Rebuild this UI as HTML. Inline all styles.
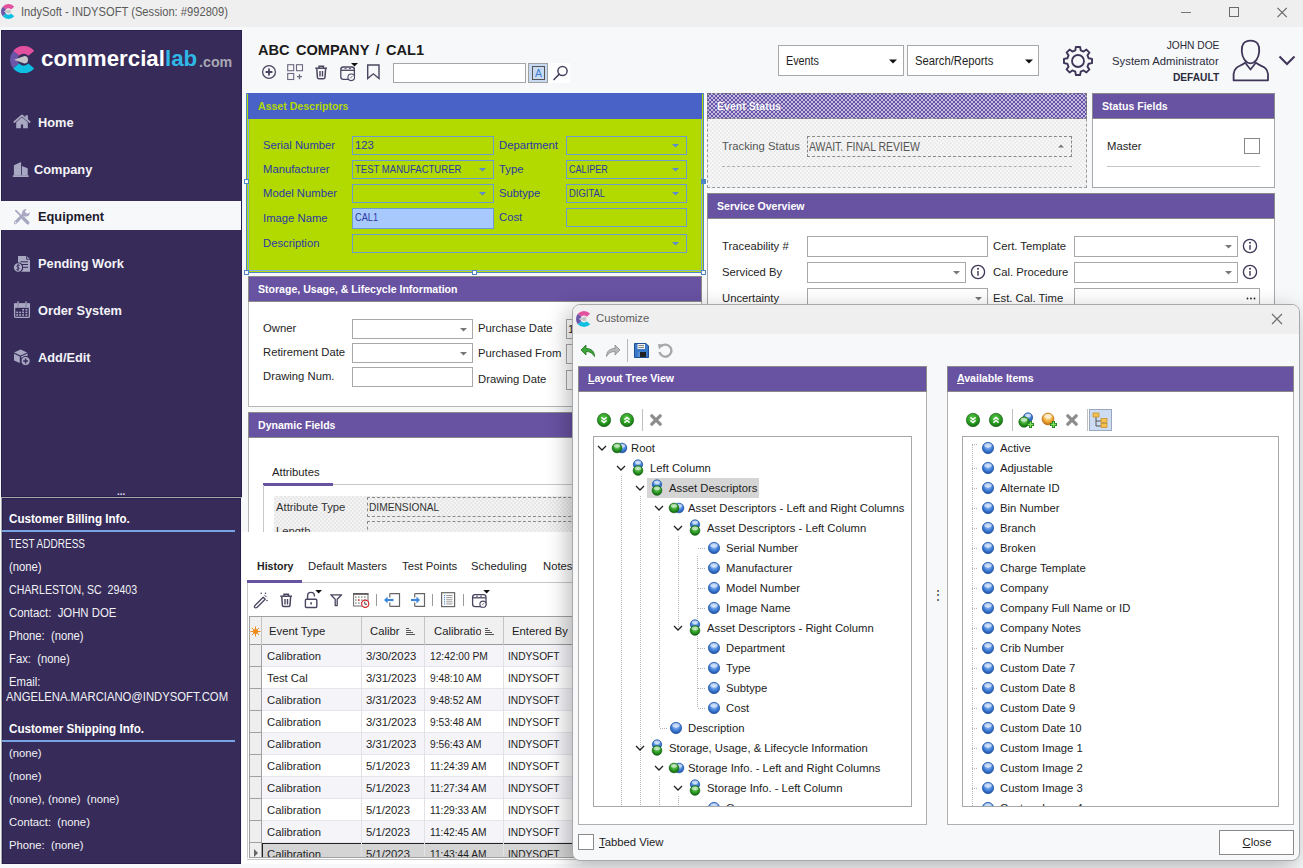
<!DOCTYPE html>
<html><head><meta charset="utf-8"><title>IndySoft</title>
<style>
*{margin:0;padding:0;box-sizing:border-box}
html,body{width:1303px;height:868px;overflow:hidden;background:#f7f8fa;font-family:'Liberation Sans', sans-serif}
.a{position:absolute}
.t{position:absolute;white-space:nowrap;line-height:1}
</style></head><body>
<div class="a" style="left:0px;top:0px;width:1303px;height:27px;background:#efefef"></div><div class="a" style="left:0px;top:27px;width:1303px;height:3px;background:#f7f8fa"></div><svg class="a" style="left:1px;top:4px;" width="15" height="15" viewBox="0 0 15 15"><path d="M11.64,4.03 A5.40,5.40 0 0 0 3.36,4.03" fill="none" stroke="#e2509e" stroke-width="4.20"/><path d="M3.36,4.03 A5.40,5.40 0 0 0 3.36,10.97" fill="none" stroke="#6a55a8" stroke-width="4.20"/><path d="M3.36,10.97 A5.40,5.40 0 0 0 11.64,10.97" fill="none" stroke="#0fc0e2" stroke-width="4.20"/><path d="M2.17,7.50 L7.88,5.47 A2.03,2.03 0 1,1 7.88,9.53 Z" fill="#c6c5ca"/></svg><div class="t" style="left:21px;top:5.54px;font-size:12px;font-weight:400;color:#5a5a5a;transform:scaleX(0.93);transform-origin:0 0;">IndySoft - INDYSOFT (Session: #992809)</div><svg class="a" style="left:1180px;top:7px;" width="110" height="12" viewBox="0 0 110 12"><path d="M1,5.5H11" stroke="#777" stroke-width="1"/><rect x="49.5" y="0.5" width="9" height="9" fill="none" stroke="#6a6a6a" stroke-width="1"/><path d="M97.5,0.8L106.8,10.1M106.8,0.8L97.5,10.1" stroke="#666" stroke-width="1.2"/></svg><div class="a" style="left:1px;top:30px;width:241px;height:467px;background:#362b59;border:1px solid #2a2050"></div><div class="a" style="left:1px;top:497px;width:1px;height:367px;background:#a8a8a8"></div><div class="a" style="left:2px;top:498px;width:239px;height:366px;background:#362b59;border:1px solid #2a2050"></div><svg class="a" style="left:10.3px;top:45.7px;" width="27.4" height="27.4" viewBox="0 0 27.4 27.4"><path d="M21.26,7.36 A9.86,9.86 0 0 0 6.14,7.36" fill="none" stroke="#e2509e" stroke-width="7.67"/><path d="M6.14,7.36 A9.86,9.86 0 0 0 6.14,20.04" fill="none" stroke="#6a55a8" stroke-width="7.67"/><path d="M6.14,20.04 A9.86,9.86 0 0 0 21.26,20.04" fill="none" stroke="#0fc0e2" stroke-width="7.67"/><path d="M3.97,13.70 L14.38,10.00 A3.70,3.70 0 1,1 14.38,17.40 Z" fill="#c6c5ca"/></svg><div class="t" style="left:41px;top:48.12px;font-size:22.3px;font-weight:700;color:#ffffff;">commercial</div><div class="t" style="left:165px;top:48.12px;font-size:22.3px;font-weight:700;color:#2fb8e6;">lab</div><div class="t" style="left:198.5px;top:54.30px;font-size:15px;font-weight:700;color:#a9a7b3;transform:scaleX(0.95);transform-origin:0 0;">.com</div><div class="a" style="left:1px;top:201px;width:240px;height:29px;background:#f7f8fa"></div><div class="t" style="left:38px;top:117.16px;font-size:12.8px;font-weight:700;color:#f4f3f8;">Home</div><div class="t" style="left:34px;top:164.16px;font-size:12.8px;font-weight:700;color:#f4f3f8;">Company</div><div class="t" style="left:38px;top:211.16px;font-size:12.8px;font-weight:700;color:#1b1b2b;">Equipment</div><div class="t" style="left:38px;top:258.16px;font-size:12.8px;font-weight:700;color:#f4f3f8;">Pending Work</div><div class="t" style="left:38px;top:305.16px;font-size:12.8px;font-weight:700;color:#f4f3f8;">Order System</div><div class="t" style="left:38px;top:352.16px;font-size:12.8px;font-weight:700;color:#f4f3f8;">Add/Edit</div><svg class="a" style="left:8px;top:108px;" width="30" height="30" viewBox="0 0 30 30"><path d="M8.2,12.2 L14,7.4 L19.8,12.2 V20.2 H15.1 V16.6 H12.9 V20.2 H8.2Z" fill="#a9a8c2"/><path d="M6.3,14 L14,7.3 L21.7,14" fill="none" stroke="#a9a8c2" stroke-width="1.7" stroke-linecap="round" stroke-linejoin="round"/><path d="M14,9 L8,14" stroke="#362b59" stroke-width="0.7"/><path d="M14,9 L20,14" stroke="#362b59" stroke-width="0.7"/><rect x="17.4" y="7.3" width="2.5" height="4" fill="#a9a8c2"/></svg><svg class="a" style="left:8px;top:155px;" width="30" height="30" viewBox="0 0 30 30"><path d="M5.9,10.2 L13.1,6.9 V20.5 H5.9Z M13.9,10.9 L19.7,13.3 V20.5 H13.9Z" fill="#a9a8c2"/><rect x="4.6" y="20.2" width="16.3" height="1.7" rx="0.8" fill="#a9a8c2"/></svg><svg class="a" style="left:8px;top:202px;" width="30" height="30" viewBox="0 0 30 30"><path d="M7.8,8.6 L14.5,15.3" stroke="#a9a8c2" stroke-width="1.7" stroke-linecap="round"/><path d="M15.3,16.3 L19.8,20.8" stroke="#a9a8c2" stroke-width="3.4" stroke-linecap="round"/><path d="M7.4,20.6 L15.2,12.8" stroke="#a9a8c2" stroke-width="3" stroke-linecap="round"/><path d="M14.2,12.4 C13.6,9.3 15.6,6.8 18.6,7 L17,9.4 L18.2,11.4 L20.8,11.3 L21.7,10 C22.2,13.2 19.6,15.2 16.6,14.6Z" fill="#a9a8c2"/><circle cx="7.6" cy="20.5" r="0.8" fill="#f7f8fa"/></svg><svg class="a" style="left:8px;top:250px;" width="30" height="30" viewBox="0 0 30 30"><path d="M10,5.9 H18.6 L22,9.3 V21.8 H10Z" fill="#a9a8c2"/><path d="M18.6,5.9 V9.3 H22" fill="none" stroke="#362b59" stroke-width="0.9"/><path d="M12.5,11.8H20M14,14.5H20M15,17.3H20" stroke="#362b59" stroke-width="1"/><circle cx="10" cy="17.5" r="4.7" fill="#a9a8c2" stroke="#362b59" stroke-width="1.1"/><path d="M10,14.2 V20.8 M11.6,15.4 C9,14.3 8.2,17 10,17.4 C11.8,17.8 11.2,20.3 8.4,19.5" fill="none" stroke="#362b59" stroke-width="1"/></svg><svg class="a" style="left:8px;top:296px;" width="30" height="30" viewBox="0 0 30 30"><rect x="6.6" y="8" width="14.8" height="13.4" rx="0.8" fill="none" stroke="#a9a8c2" stroke-width="1.3"/><rect x="6" y="7.4" width="16" height="4.4" fill="#a9a8c2"/><path d="M10,5.8V10.5M18,5.8V10.5" stroke="#8f8ea8" stroke-width="1.6" stroke-linecap="round"/><rect x="14.2" y="13.0" width="1.8" height="1.6" fill="#a9a8c2"/><rect x="17.5" y="13.0" width="1.8" height="1.6" fill="#a9a8c2"/><rect x="8.299999999999999" y="15.599999999999998" width="1.8" height="1.6" fill="#a9a8c2"/><rect x="11.2" y="15.599999999999998" width="1.8" height="1.6" fill="#a9a8c2"/><rect x="14.2" y="15.599999999999998" width="1.8" height="1.6" fill="#a9a8c2"/><rect x="17.5" y="15.599999999999998" width="1.8" height="1.6" fill="#a9a8c2"/><rect x="8.299999999999999" y="18.2" width="1.8" height="1.6" fill="#a9a8c2"/><rect x="11.2" y="18.2" width="1.8" height="1.6" fill="#a9a8c2"/><rect x="14.2" y="18.2" width="1.8" height="1.6" fill="#a9a8c2"/><rect x="17.5" y="18.2" width="1.8" height="1.6" fill="#a9a8c2"/></svg><svg class="a" style="left:8px;top:343px;" width="30" height="30" viewBox="0 0 30 30"><path d="M6,9.6 L12.6,6.4 L19.2,9.6 L12.6,12.6Z" fill="#a9a8c2"/><path d="M6,10.8 L11.8,13.4 V20 L6,17.6Z" fill="#a9a8c2"/><path d="M13.3,13.3 L19.6,10.6 V12.6 L13.3,15.3Z" fill="#a9a8c2"/><circle cx="17.6" cy="18" r="4.6" fill="#a9a8c2" stroke="#362b59" stroke-width="1"/><path d="M17.6,15.6V20.4M15.2,18H20" stroke="#362b59" stroke-width="1.5"/></svg><div class="t" style="left:117px;top:486.54px;font-size:10px;font-weight:700;color:#d8d8e8;">...</div><div class="a" style="left:1px;top:497px;width:241px;height:1px;background:#a8a8a8"></div><div class="t" style="left:9px;top:513.42px;font-size:12.5px;font-weight:700;color:#ffffff;transform:scaleX(0.93);transform-origin:0 0;">Customer Billing Info.</div><div class="a" style="left:2px;top:530px;width:233px;height:2px;background:#7aa3e6"></div><div class="t" style="left:9px;top:537.84px;font-size:12px;font-weight:400;color:#f2f2f6;transform:scaleX(0.834);transform-origin:0 0;">TEST ADDRESS</div><div class="t" style="left:9px;top:560.84px;font-size:12px;font-weight:400;color:#f2f2f6;transform:scaleX(0.94);transform-origin:0 0;">(none)</div><div class="t" style="left:9px;top:583.84px;font-size:12px;font-weight:400;color:#f2f2f6;transform:scaleX(0.882);transform-origin:0 0;">CHARLESTON, SC&nbsp; 29403</div><div class="t" style="left:9px;top:606.84px;font-size:12px;font-weight:400;color:#f2f2f6;transform:scaleX(0.947);transform-origin:0 0;">Contact:&nbsp; JOHN DOE</div><div class="t" style="left:9px;top:629.84px;font-size:12px;font-weight:400;color:#f2f2f6;transform:scaleX(0.94);transform-origin:0 0;">Phone:&nbsp; (none)</div><div class="t" style="left:9px;top:652.84px;font-size:12px;font-weight:400;color:#f2f2f6;transform:scaleX(0.94);transform-origin:0 0;">Fax:&nbsp; (none)</div><div class="t" style="left:9px;top:675.84px;font-size:12px;font-weight:400;color:#f2f2f6;transform:scaleX(0.94);transform-origin:0 0;">Email:</div><div class="t" style="left:6px;top:690.84px;font-size:12px;font-weight:400;color:#f2f2f6;transform:scaleX(0.94);transform-origin:0 0;">ANGELENA.MARCIANO@INDYSOFT.COM</div><div class="t" style="left:9px;top:723.42px;font-size:12.5px;font-weight:700;color:#ffffff;transform:scaleX(0.93);transform-origin:0 0;">Customer Shipping Info.</div><div class="a" style="left:2px;top:740px;width:233px;height:2px;background:#7aa3e6"></div><div class="t" style="left:9px;top:748.27px;font-size:11.5px;font-weight:400;color:#f2f2f6;transform:scaleX(0.9809);transform-origin:0 0;">(none)</div><div class="t" style="left:9px;top:771.27px;font-size:11.5px;font-weight:400;color:#f2f2f6;transform:scaleX(0.9809);transform-origin:0 0;">(none)</div><div class="t" style="left:9px;top:794.27px;font-size:11.5px;font-weight:400;color:#f2f2f6;transform:scaleX(0.9809);transform-origin:0 0;">(none), (none)&nbsp; (none)</div><div class="t" style="left:9px;top:817.27px;font-size:11.5px;font-weight:400;color:#f2f2f6;transform:scaleX(0.9809);transform-origin:0 0;">Contact:&nbsp; (none)</div><div class="t" style="left:9px;top:840.27px;font-size:11.5px;font-weight:400;color:#f2f2f6;transform:scaleX(0.9809);transform-origin:0 0;">Phone:&nbsp; (none)</div><div class="t" style="left:258px;top:42.38px;font-size:15.5px;font-weight:700;color:#1b1b1b;transform:scaleX(0.94);transform-origin:0 0;word-spacing:2.5px">ABC COMPANY / CAL1</div><svg class="a" style="left:255px;top:58px;" width="130" height="28" viewBox="0 0 130 28"><circle cx="14" cy="14" r="6.4" fill="none" stroke="#4b4560" stroke-width="1.3"/><path d="M14,10.6V17.4M10.6,14H17.4" stroke="#4b4560" stroke-width="1.8"/><rect x="32.7" y="6.7" width="6" height="6" fill="none" stroke="#6e6880" stroke-width="1.1"/><rect x="41.5" y="6.7" width="6" height="6" fill="none" stroke="#6e6880" stroke-width="1.1"/><rect x="32.7" y="15.5" width="6" height="6" fill="none" stroke="#6e6880" stroke-width="1.1"/><path d="M44.5,16.2V21.2M42,18.7H47" stroke="#6e6880" stroke-width="1.3"/><path d="M60.3,10.2H72" stroke="#4b4560" stroke-width="1.5"/><path d="M64,10V8.2H68.5V10" fill="none" stroke="#4b4560" stroke-width="1.4"/><path d="M61.8,11 L62.4,19.5 Q62.6,20.8 64,20.8 H68.4 Q69.8,20.8 70,19.5 L70.6,11" fill="none" stroke="#4b4560" stroke-width="1.5"/><path d="M65,13V18.5M67.5,13V18.5" stroke="#4b4560" stroke-width="1.4"/><rect x="85.8" y="9" width="13.6" height="12.4" rx="2.6" fill="none" stroke="#4b4560" stroke-width="1.3"/><path d="M86,12.3H99.2" stroke="#4b4560" stroke-width="1.3"/><path d="M89.5,10.6H91.5M94,10.6H96" stroke="#4b4560" stroke-width="0.9"/><circle cx="96.2" cy="19.3" r="3.3" fill="#f7f8fa" stroke="#4b4560" stroke-width="1.1"/><path d="M95.3,20.3L97.2,18.2" stroke="#4b4560" stroke-width="0.8"/><path d="M96,5H103L99.5,8.6Z" fill="#111"/><path d="M112.7,7H124V20.6L118.35,15.8L112.7,20.6Z" fill="none" stroke="#4b4560" stroke-width="1.4" stroke-linejoin="miter"/></svg><div class="a" style="left:393px;top:63px;width:133px;height:20px;background:#fff;border:1px solid #a6a6a6"></div><div class="a" style="left:528px;top:63px;width:20px;height:20px;background:#c8d9f2;border:1px solid #a0a0a0"></div><div class="a" style="left:532px;top:66px;width:13px;height:14px;border:1px solid #555"></div><div class="t" style="left:535px;top:68.19px;font-size:11px;font-weight:400;color:#3d7fd0;transform:scaleX(0.95);transform-origin:0 0;">A</div><div class="a" style="left:548px;top:63px;width:22px;height:20px;background:#ffffff"></div><svg class="a" style="left:552px;top:65px;" width="17" height="17" viewBox="0 0 17 17"><circle cx="10.5" cy="6" r="4.6" fill="none" stroke="#4b4560" stroke-width="1.5"/><path d="M7.3,9.2L2,14.5" stroke="#4b4560" stroke-width="1.7" stroke-linecap="round"/></svg><div class="a" style="left:778px;top:45px;width:126px;height:31px;background:#fff;border:1px solid #a8a8a8"></div><div class="t" style="left:786px;top:54.84px;font-size:12px;font-weight:400;color:#1e1e1e;transform:scaleX(0.9);transform-origin:0 0;">Events</div><svg class="a" style="left:889px;top:59px;" width="9" height="5" viewBox="0 0 9 5"><path d="M0,0.5H8L4,4.5Z" fill="#111"/></svg><div class="a" style="left:907px;top:45px;width:132px;height:31px;background:#fff;border:1px solid #a8a8a8"></div><div class="t" style="left:915px;top:54.84px;font-size:12px;font-weight:400;color:#1e1e1e;transform:scaleX(0.94);transform-origin:0 0;">Search/Reports</div><svg class="a" style="left:1025px;top:59px;" width="9" height="5" viewBox="0 0 9 5"><path d="M0,0.5H8L4,4.5Z" fill="#111"/></svg><svg class="a" style="left:1062px;top:45px;" width="32" height="32" viewBox="0 0 32 32"><path d="M26.66,13.28 L30.04,13.88 L30.04,18.12 L26.66,18.72 L25.46,21.61 L27.43,24.43 L24.43,27.43 L21.61,25.46 L18.72,26.66 L18.12,30.04 L13.88,30.04 L13.28,26.66 L10.39,25.46 L7.57,27.43 L4.57,24.43 L6.54,21.61 L5.34,18.72 L1.96,18.12 L1.96,13.88 L5.34,13.28 L6.54,10.39 L4.57,7.57 L7.57,4.57 L10.39,6.54 L13.28,5.34 L13.88,1.96 L18.12,1.96 L18.72,5.34 L21.61,6.54 L24.43,4.57 L27.43,7.57 L25.46,10.39Z" fill="none" stroke="#3e3558" stroke-width="1.9" stroke-linejoin="round"/><circle cx="16" cy="16" r="6" fill="none" stroke="#3e3558" stroke-width="1.8"/></svg><div class="t" style="right:84px;top:40.27px;font-size:11.5px;font-weight:400;color:#2b2b3b;transform:scaleX(0.887);transform-origin:100% 0;">JOHN DOE</div><div class="t" style="right:84px;top:56.27px;font-size:11.5px;font-weight:400;color:#2b2b3b;transform:scaleX(0.9809);transform-origin:100% 0;">System Administrator</div><div class="t" style="right:84px;top:72.27px;font-size:11.5px;font-weight:700;color:#2b2b3b;transform:scaleX(0.887);transform-origin:100% 0;">DEFAULT</div><svg class="a" style="left:1231px;top:39px;" width="39" height="43" viewBox="0 0 39 43"><path d="M19.5,1.7 C12.5,1.7 10.3,6.5 10.8,12.5 C11.3,19 14.5,24.3 19.5,24.3 C24.5,24.3 27.7,19 28.2,12.5 C28.7,6.5 26.5,1.7 19.5,1.7Z" fill="none" stroke="#3e3558" stroke-width="1.8"/><path d="M14,23.5 L19.5,30.5 L25,23.5" fill="none" stroke="#3e3558" stroke-width="1.7" stroke-linejoin="round"/><path d="M14,23.5 C11,27.5 3.2,26.5 2.6,35 V41.3 H37 V35 C36.4,26.5 28,27.5 25,23.5" fill="none" stroke="#3e3558" stroke-width="1.8" stroke-linejoin="round"/></svg><svg class="a" style="left:1278px;top:55px;" width="18" height="12" viewBox="0 0 18 12"><path d="M1.5,1.5L9,9L16.5,1.5" fill="none" stroke="#3e3558" stroke-width="2"/></svg><div class="a" style="left:246px;top:93px;width:458px;height:180px;border:1px solid #4f86c6"></div><div class="a" style="left:247px;top:94px;width:456px;height:178px;background:#b2d900"></div><div class="a" style="left:248px;top:93px;width:454px;height:26px;background:#4962c8"></div><div class="a" style="left:248px;top:270px;width:454px;height:1px;background:#84aee0"></div><div class="a" style="left:248px;top:119px;width:1px;height:152px;background:#84aee0"></div><div class="a" style="left:701px;top:119px;width:1px;height:152px;background:#84aee0"></div><div class="t" style="left:258px;top:101.27px;font-size:11.5px;font-weight:700;color:#b2d900;transform:scaleX(0.9183);transform-origin:0 0;">Asset Descriptors</div><div class="a" style="left:244px;top:179px;width:5px;height:5px;background:#fff;border:1px solid #4f86c6"></div><div class="a" style="left:472px;top:270px;width:5px;height:5px;background:#fff;border:1px solid #4f86c6"></div><div class="a" style="left:701px;top:179px;width:5px;height:5px;background:#fff;border:1px solid #4f86c6"></div><div class="a" style="left:244px;top:270px;width:5px;height:5px;background:#fff;border:1px solid #4f86c6"></div><div class="a" style="left:701px;top:270px;width:5px;height:5px;background:#fff;border:1px solid #4f86c6"></div><div class="a" style="left:701px;top:179px;width:5px;height:5px;background:#4f86c6"></div><div class="t" style="left:263px;top:140.27px;font-size:11.5px;font-weight:400;color:#2c3aa6;transform:scaleX(0.9809);transform-origin:0 0;">Serial Number</div><div class="t" style="left:263px;top:164.27px;font-size:11.5px;font-weight:400;color:#2c3aa6;transform:scaleX(0.9809);transform-origin:0 0;">Manufacturer</div><div class="t" style="left:263px;top:188.27px;font-size:11.5px;font-weight:400;color:#2c3aa6;transform:scaleX(0.9809);transform-origin:0 0;">Model Number</div><div class="t" style="left:263px;top:213.27px;font-size:11.5px;font-weight:400;color:#2c3aa6;transform:scaleX(0.9809);transform-origin:0 0;">Image Name</div><div class="t" style="left:263px;top:238.27px;font-size:11.5px;font-weight:400;color:#2c3aa6;transform:scaleX(0.9809);transform-origin:0 0;">Description</div><div class="t" style="left:499px;top:140.27px;font-size:11.5px;font-weight:400;color:#2c3aa6;transform:scaleX(0.9809);transform-origin:0 0;">Department</div><div class="t" style="left:499px;top:164.27px;font-size:11.5px;font-weight:400;color:#2c3aa6;transform:scaleX(0.9809);transform-origin:0 0;">Type</div><div class="t" style="left:499px;top:188.27px;font-size:11.5px;font-weight:400;color:#2c3aa6;transform:scaleX(0.9809);transform-origin:0 0;">Subtype</div><div class="t" style="left:499px;top:212.27px;font-size:11.5px;font-weight:400;color:#2c3aa6;transform:scaleX(0.9809);transform-origin:0 0;">Cost</div><div class="a" style="left:352px;top:136px;width:142px;height:19px;border:1px solid #6c9bcc;"></div><div class="t" style="left:355px;top:140.27px;font-size:11.5px;font-weight:400;color:#2c3aa6;transform:scaleX(0.9809);transform-origin:0 0;">123</div><div class="a" style="left:352px;top:160px;width:142px;height:19px;border:1px solid #6c9bcc;"></div><div class="t" style="left:355px;top:164.27px;font-size:11.5px;font-weight:400;color:#2c3aa6;transform:scaleX(0.83);transform-origin:0 0;">TEST MANUFACTURER</div><svg class="a" style="left:479px;top:168px;" width="8" height="4" viewBox="0 0 8 4"><path d="M0,0H7L3.5,3.5Z" fill="#5a8ad0"/></svg><div class="a" style="left:352px;top:184px;width:142px;height:19px;border:1px solid #6c9bcc;"></div><svg class="a" style="left:479px;top:192px;" width="8" height="4" viewBox="0 0 8 4"><path d="M0,0H7L3.5,3.5Z" fill="#5a8ad0"/></svg><div class="a" style="left:352px;top:208px;width:142px;height:21px;border:1px solid #6c9bcc;background:#a8c9fb;"></div><div class="t" style="left:355px;top:212.27px;font-size:11.5px;font-weight:400;color:#2c3aa6;transform:scaleX(0.8);transform-origin:0 0;">CAL1</div><div class="a" style="left:352px;top:234px;width:335px;height:19px;border:1px solid #6c9bcc;"></div><svg class="a" style="left:672px;top:242px;" width="8" height="4" viewBox="0 0 8 4"><path d="M0,0H7L3.5,3.5Z" fill="#5a8ad0"/></svg><div class="a" style="left:566px;top:136px;width:121px;height:19px;border:1px solid #6c9bcc;"></div><svg class="a" style="left:672px;top:144px;" width="8" height="4" viewBox="0 0 8 4"><path d="M0,0H7L3.5,3.5Z" fill="#5a8ad0"/></svg><div class="a" style="left:566px;top:160px;width:121px;height:19px;border:1px solid #6c9bcc;"></div><div class="t" style="left:569px;top:164.27px;font-size:11.5px;font-weight:400;color:#2c3aa6;transform:scaleX(0.79);transform-origin:0 0;">CALIPER</div><svg class="a" style="left:672px;top:168px;" width="8" height="4" viewBox="0 0 8 4"><path d="M0,0H7L3.5,3.5Z" fill="#5a8ad0"/></svg><div class="a" style="left:566px;top:184px;width:121px;height:19px;border:1px solid #6c9bcc;"></div><div class="t" style="left:569px;top:188.27px;font-size:11.5px;font-weight:400;color:#2c3aa6;transform:scaleX(0.82);transform-origin:0 0;">DIGITAL</div><svg class="a" style="left:672px;top:192px;" width="8" height="4" viewBox="0 0 8 4"><path d="M0,0H7L3.5,3.5Z" fill="#5a8ad0"/></svg><div class="a" style="left:566px;top:208px;width:121px;height:19px;border:1px solid #6c9bcc;"></div><div class="a" style="left:707px;top:93px;width:380px;height:95px;background:repeating-conic-gradient(#ececec 0 25%, #f6f6f6 0 50%) 0 0/4px 4px;border:1px dashed #9a9a9a"></div><div class="a" style="left:707px;top:93px;width:380px;height:26px;background:repeating-conic-gradient(#6854a8 0 25%, #c4bcde 0 50%) 0 0/4px 4px"></div><div class="a" style="left:707px;top:93px;width:380px;height:26px;border:1px dashed #777"></div><div class="a" style="left:707px;top:118px;width:380px;height:1px;border-top:1px dashed #8a8a8a"></div><div class="t" style="left:717px;top:101.27px;font-size:11.5px;font-weight:700;color:#ffffff;transform:scaleX(0.9183);transform-origin:0 0;text-shadow:0 0 1px #3f2f93">Event Status</div><div class="t" style="left:722px;top:141.27px;font-size:11.5px;font-weight:400;color:#555;transform:scaleX(0.9809);transform-origin:0 0;">Tracking Status</div><div class="a" style="left:807px;top:136px;width:265px;height:21px;border:1px dashed #8a8a8a"></div><div class="t" style="left:809px;top:140.84px;font-size:12px;font-weight:400;color:#555;transform:scaleX(0.876);transform-origin:0 0;">AWAIT. FINAL REVIEW</div><svg class="a" style="left:1058px;top:144px;" width="6" height="4" viewBox="0 0 6 4"><path d="M0,3.5L3,0.5L6,3.5Z" fill="#777"/></svg><div class="a" style="left:722px;top:166px;width:350px;height:1px;border-top:1px dashed #b0b0b0"></div><div class="a" style="left:1092px;top:93px;width:183px;height:95px;background:#fff;border:1px solid #a9a9a9"></div><div class="a" style="left:1092px;top:93px;width:183px;height:26px;background:#6852a2;border:1px solid #8b8b8b"></div><div class="t" style="left:1102px;top:101.27px;font-size:11.5px;font-weight:700;color:#ffffff;transform:scaleX(0.9183);transform-origin:0 0;">Status Fields</div><div class="t" style="left:1107px;top:141.27px;font-size:11.5px;font-weight:400;color:#1e1e1e;transform:scaleX(0.9809);transform-origin:0 0;">Master</div><div class="a" style="left:1244px;top:138px;width:16px;height:16px;border:1px solid #888;background:#fff"></div><div class="a" style="left:1107px;top:166px;width:153px;height:1px;background:#c4c4c4"></div><div class="a" style="left:707px;top:193px;width:568px;height:140px;background:#fff;border:1px solid #a9a9a9"></div><div class="a" style="left:707px;top:193px;width:568px;height:26px;background:#6852a2;border:1px solid #8b8b8b"></div><div class="t" style="left:717px;top:201.27px;font-size:11.5px;font-weight:700;color:#ffffff;transform:scaleX(0.9183);transform-origin:0 0;">Service Overview</div><div class="t" style="left:722px;top:241.27px;font-size:11.5px;font-weight:400;color:#1e1e1e;transform:scaleX(0.9809);transform-origin:0 0;">Traceability #</div><div class="t" style="left:722px;top:267.27px;font-size:11.5px;font-weight:400;color:#1e1e1e;transform:scaleX(0.9809);transform-origin:0 0;">Serviced By</div><div class="t" style="left:722px;top:293.27px;font-size:11.5px;font-weight:400;color:#1e1e1e;transform:scaleX(0.9809);transform-origin:0 0;">Uncertainty</div><div class="a" style="left:807px;top:236px;width:181px;height:21px;background:#fff;border:1px solid #a8a8a8"></div><div class="a" style="left:807px;top:262px;width:159px;height:21px;background:#fff;border:1px solid #a8a8a8"></div><svg class="a" style="left:953px;top:271px;" width="7" height="4" viewBox="0 0 7 4"><path d="M0,0H7L3.5,3.5Z" fill="#777"/></svg><svg class="a" style="left:970px;top:264px;" width="16" height="16" viewBox="0 0 16 16"><circle cx="8" cy="8" r="6.6" fill="none" stroke="#3e3558" stroke-width="1.3"/><circle cx="8" cy="4.8" r="1" fill="#3e3558"/><path d="M8,7V11.8" stroke="#3e3558" stroke-width="1.4"/></svg><div class="a" style="left:807px;top:288px;width:181px;height:21px;background:#fff;border:1px solid #a8a8a8"></div><svg class="a" style="left:975px;top:297px;" width="7" height="4" viewBox="0 0 7 4"><path d="M0,0H7L3.5,3.5Z" fill="#777"/></svg><div class="t" style="left:993px;top:241.27px;font-size:11.5px;font-weight:400;color:#1e1e1e;transform:scaleX(0.9809);transform-origin:0 0;">Cert. Template</div><div class="t" style="left:993px;top:267.27px;font-size:11.5px;font-weight:400;color:#1e1e1e;transform:scaleX(0.9809);transform-origin:0 0;">Cal. Procedure</div><div class="t" style="left:993px;top:293.27px;font-size:11.5px;font-weight:400;color:#1e1e1e;transform:scaleX(0.9809);transform-origin:0 0;">Est. Cal. Time</div><div class="a" style="left:1074px;top:236px;width:164px;height:21px;background:#fff;border:1px solid #a8a8a8"></div><svg class="a" style="left:1225px;top:245px;" width="7" height="4" viewBox="0 0 7 4"><path d="M0,0H7L3.5,3.5Z" fill="#777"/></svg><svg class="a" style="left:1242px;top:238px;" width="16" height="16" viewBox="0 0 16 16"><circle cx="8" cy="8" r="6.6" fill="none" stroke="#3e3558" stroke-width="1.3"/><circle cx="8" cy="4.8" r="1" fill="#3e3558"/><path d="M8,7V11.8" stroke="#3e3558" stroke-width="1.4"/></svg><div class="a" style="left:1074px;top:262px;width:164px;height:21px;background:#fff;border:1px solid #a8a8a8"></div><svg class="a" style="left:1225px;top:271px;" width="7" height="4" viewBox="0 0 7 4"><path d="M0,0H7L3.5,3.5Z" fill="#777"/></svg><svg class="a" style="left:1242px;top:264px;" width="16" height="16" viewBox="0 0 16 16"><circle cx="8" cy="8" r="6.6" fill="none" stroke="#3e3558" stroke-width="1.3"/><circle cx="8" cy="4.8" r="1" fill="#3e3558"/><path d="M8,7V11.8" stroke="#3e3558" stroke-width="1.4"/></svg><div class="a" style="left:1074px;top:288px;width:186px;height:21px;background:#fff;border:1px solid #a8a8a8"></div><svg class="a" style="left:1246px;top:297px;" width="10" height="3" viewBox="0 0 10 3"><circle cx="1.5" cy="1.5" r="0.9" fill="#222"/><circle cx="5" cy="1.5" r="0.9" fill="#222"/><circle cx="8.5" cy="1.5" r="0.9" fill="#222"/></svg><div class="a" style="left:248px;top:276px;width:454px;height:131px;background:#fff;border:1px solid #b5b5b5"></div><div class="a" style="left:248px;top:276px;width:454px;height:26px;background:#6852a2;border:1px solid #8b8b8b"></div><div class="t" style="left:258px;top:284.27px;font-size:11.5px;font-weight:700;color:#ffffff;transform:scaleX(0.9183);transform-origin:0 0;">Storage, Usage, &amp; Lifecycle Information</div><div class="t" style="left:263px;top:323.27px;font-size:11.5px;font-weight:400;color:#1e1e1e;transform:scaleX(0.9809);transform-origin:0 0;">Owner</div><div class="t" style="left:263px;top:347.27px;font-size:11.5px;font-weight:400;color:#1e1e1e;transform:scaleX(0.9809);transform-origin:0 0;">Retirement Date</div><div class="t" style="left:263px;top:371.27px;font-size:11.5px;font-weight:400;color:#1e1e1e;transform:scaleX(0.9809);transform-origin:0 0;">Drawing Num.</div><div class="a" style="left:352px;top:319px;width:121px;height:20px;background:#fff;border:1px solid #a8a8a8"></div><svg class="a" style="left:460px;top:328px;" width="7" height="4" viewBox="0 0 7 4"><path d="M0,0H7L3.5,3.5Z" fill="#777"/></svg><div class="a" style="left:352px;top:343px;width:121px;height:20px;background:#fff;border:1px solid #a8a8a8"></div><svg class="a" style="left:460px;top:352px;" width="7" height="4" viewBox="0 0 7 4"><path d="M0,0H7L3.5,3.5Z" fill="#777"/></svg><div class="a" style="left:352px;top:367px;width:121px;height:20px;background:#fff;border:1px solid #a8a8a8"></div><div class="t" style="left:478px;top:323.27px;font-size:11.5px;font-weight:400;color:#1e1e1e;transform:scaleX(0.9809);transform-origin:0 0;">Purchase Date</div><div class="t" style="left:478px;top:348.27px;font-size:11.5px;font-weight:400;color:#1e1e1e;transform:scaleX(0.9809);transform-origin:0 0;">Purchased From</div><div class="t" style="left:478px;top:374.27px;font-size:11.5px;font-weight:400;color:#1e1e1e;transform:scaleX(0.9809);transform-origin:0 0;">Drawing Date</div><div class="a" style="left:566px;top:319px;width:130px;height:20px;background:#fff;border:1px solid #a8a8a8"></div><div class="t" style="left:568px;top:324.27px;font-size:11.5px;font-weight:400;color:#1e1e1e;transform:scaleX(0.9809);transform-origin:0 0;">1</div><div class="a" style="left:566px;top:344px;width:130px;height:20px;background:#fff;border:1px solid #a8a8a8"></div><div class="a" style="left:566px;top:370px;width:130px;height:20px;background:#fff;border:1px solid #a8a8a8"></div><div class="a" style="left:248px;top:412px;width:454px;height:121px;background:#fff;border:1px solid #b5b5b5;border-bottom:none"></div><div class="a" style="left:248px;top:412px;width:454px;height:26px;background:#6852a2;border:1px solid #8b8b8b"></div><div class="t" style="left:258px;top:420.27px;font-size:11.5px;font-weight:700;color:#ffffff;transform:scaleX(0.9183);transform-origin:0 0;">Dynamic Fields</div><div class="t" style="left:272px;top:467.27px;font-size:11.5px;font-weight:400;color:#1e1e1e;transform:scaleX(0.9809);transform-origin:0 0;">Attributes</div><div class="a" style="left:263px;top:484px;width:440px;height:1px;background:#c8c8c8"></div><div class="a" style="left:263px;top:483px;width:70px;height:3px;background:#6852a2"></div><div class="a" style="left:263px;top:485px;width:1px;height:47px;background:#c8c8c8"></div><div class="a" style="left:274px;top:496px;width:430px;height:36px;background:repeating-conic-gradient(#e8e8e8 0 25%, #f3f3f3 0 50%) 0 0/4px 4px"></div><div class="t" style="left:276px;top:502.27px;font-size:11.5px;font-weight:400;color:#333;transform:scaleX(0.9809);transform-origin:0 0;">Attribute Type</div><div class="a" style="left:367px;top:497px;width:340px;height:20px;border:1px dashed #8a8a8a"></div><div class="t" style="left:369px;top:502.27px;font-size:11.5px;font-weight:400;color:#333;transform:scaleX(0.887);transform-origin:0 0;">DIMENSIONAL</div><div class="a" style="left:367px;top:521px;width:340px;height:20px;border:1px dashed #8a8a8a"></div><div class="t" style="left:276px;top:526.27px;font-size:11.5px;font-weight:400;color:#333;transform:scaleX(0.9809);transform-origin:0 0;">Length</div><div class="a" style="left:242px;top:532px;width:340px;height:13px;background:#ffffff"></div><div class="a" style="left:242px;top:545px;width:340px;height:323px;background:#ffffff"></div><div class="t" style="left:257px;top:561.27px;font-size:11.5px;font-weight:700;color:#1e1e1e;transform:scaleX(0.9183);transform-origin:0 0;">History</div><div class="t" style="left:307.5px;top:561.27px;font-size:11.5px;font-weight:400;color:#1e1e1e;transform:scaleX(0.9809);transform-origin:0 0;">Default Masters</div><div class="t" style="left:402px;top:561.27px;font-size:11.5px;font-weight:400;color:#1e1e1e;transform:scaleX(0.9809);transform-origin:0 0;">Test Points</div><div class="t" style="left:471px;top:561.27px;font-size:11.5px;font-weight:400;color:#1e1e1e;transform:scaleX(0.9809);transform-origin:0 0;">Scheduling</div><div class="t" style="left:543px;top:561.27px;font-size:11.5px;font-weight:400;color:#1e1e1e;transform:scaleX(0.9809);transform-origin:0 0;">Notes</div><div class="a" style="left:247px;top:582px;width:335px;height:1px;background:#c8c8c8"></div><div class="a" style="left:247px;top:582px;width:1px;height:278px;background:#c8c8c8"></div><div class="a" style="left:247px;top:580px;width:55px;height:3px;background:#6852a2"></div><svg class="a" style="left:250px;top:586px;" width="250" height="26" viewBox="0 0 250 26"><path d="M5.2,19.2 L13.2,11.2 L15.2,13.2 L7.2,21.2 Q5.8,22.3 4.7,21.5 Q3.9,20.5 5.2,19.2Z" fill="none" stroke="#4b4560" stroke-width="1.3" stroke-linejoin="round"/><circle cx="11.2" cy="7.3" r="0.8" fill="#4b4560"/><circle cx="15.5" cy="7.3" r="0.8" fill="#4b4560"/><circle cx="17" cy="14.5" r="0.8" fill="#4b4560"/><path d="M14.6,9.2 L16.6,11.2" stroke="#4b4560" stroke-width="1"/><path d="M30.3,10.2H42" stroke="#4b4560" stroke-width="1.5"/><path d="M34,10V8.2H38.5V10" fill="none" stroke="#4b4560" stroke-width="1.4"/><path d="M31.8,11 L32.4,19.3 Q32.6,20.6 34,20.6 H38.4 Q39.8,20.6 40,19.3 L40.6,11" fill="none" stroke="#4b4560" stroke-width="1.5"/><path d="M35,13V18.5M37.5,13V18.5" stroke="#4b4560" stroke-width="1.4"/><rect x="55.4" y="13.2" width="11.4" height="8.3" rx="1" fill="none" stroke="#4b4560" stroke-width="1.4"/><path d="M57.6,13 V9.8 A3.4,3.4 0 0,1 64.4,9.8 V10.5" fill="none" stroke="#4b4560" stroke-width="1.4"/><path d="M61.1,16.2V18.6" stroke="#4b4560" stroke-width="1.6"/><path d="M65.3,4H72L68.65,7.6Z" fill="#111"/><path d="M80.8,8.8 H91.6 L87.2,13.2 V19.6 H85.2 V13.2Z" fill="none" stroke="#4b4560" stroke-width="1.3" stroke-linejoin="round"/><rect x="103.6" y="7.6" width="14.4" height="12.4" fill="none" stroke="#6a6a6a" stroke-width="1"/><rect x="103.2" y="7.2" width="15.2" height="1.6" fill="#555"/><rect x="105" y="10.3" width="1.6" height="1.5" fill="#9a9a9a"/><rect x="108" y="10.3" width="1.6" height="1.5" fill="#9a9a9a"/><rect x="111" y="10.3" width="1.6" height="1.5" fill="#9a9a9a"/><rect x="114" y="10.3" width="1.6" height="1.5" fill="#9a9a9a"/><rect x="105" y="13.3" width="1.6" height="1.5" fill="#9a9a9a"/><rect x="108" y="13.3" width="1.6" height="1.5" fill="#d02020"/><rect x="111" y="13.3" width="1.6" height="1.5" fill="#9a9a9a"/><rect x="114" y="13.3" width="1.6" height="1.5" fill="#9a9a9a"/><rect x="105" y="16.3" width="1.6" height="1.5" fill="#9a9a9a"/><rect x="108" y="16.3" width="1.6" height="1.5" fill="#9a9a9a"/><rect x="111" y="16.3" width="1.6" height="1.5" fill="#9a9a9a"/><rect x="114" y="16.3" width="1.6" height="1.5" fill="#9a9a9a"/><circle cx="115.2" cy="17.8" r="3.6" fill="#fff" stroke="#d42a30" stroke-width="1.2"/><path d="M114.8,15.6V18.2H117" fill="none" stroke="#333" stroke-width="0.9"/><path d="M126.5,8V20" stroke="#9a9a9a" stroke-width="1"/><path d="M139.8,7.7 H149.5 V20.3 H139.8 M139.8,16.5V20.3 M139.8,7.7V11.5" fill="none" stroke="#666" stroke-width="1.2"/><path d="M143.5,14H136.5" stroke="#3d86d8" stroke-width="2.2"/><path d="M134,14 L137.5,10.5 V17.5Z" fill="#3d86d8"/><path d="M164.7,7.7 H174.5 V20.3 H164.7 M164.7,16.5V20.3 M164.7,7.7V11.5" fill="none" stroke="#666" stroke-width="1.2"/><path d="M161,14H167.5" stroke="#3d86d8" stroke-width="2.2"/><path d="M170,14 L166.5,10.5 V17.5Z" fill="#3d86d8"/><path d="M182.5,8V20" stroke="#9a9a9a" stroke-width="1"/><rect x="191.6" y="6.7" width="13" height="13.9" fill="#fff" stroke="#666" stroke-width="1.2"/><rect x="194" y="9.0" width="1.1" height="1.1" fill="#3d86d8"/><path d="M196.2,9.55H202.5" stroke="#8a8a8a" stroke-width="0.9"/><rect x="194" y="11.1" width="1.1" height="1.1" fill="#3d86d8"/><path d="M196.2,11.65H202.5" stroke="#8a8a8a" stroke-width="0.9"/><rect x="194" y="13.2" width="1.1" height="1.1" fill="#3d86d8"/><path d="M196.2,13.75H202.5" stroke="#8a8a8a" stroke-width="0.9"/><rect x="194" y="15.3" width="1.1" height="1.1" fill="#3d86d8"/><path d="M196.2,15.850000000000001H202.5" stroke="#8a8a8a" stroke-width="0.9"/><rect x="194" y="17.4" width="1.1" height="1.1" fill="#3d86d8"/><path d="M196.2,17.950000000000003H202.5" stroke="#8a8a8a" stroke-width="0.9"/><path d="M213.5,8V20" stroke="#9a9a9a" stroke-width="1"/><rect x="222.6" y="8.6" width="13.4" height="12" rx="2.6" fill="none" stroke="#4b4560" stroke-width="1.3"/><path d="M222.8,11.8H235.8" stroke="#4b4560" stroke-width="1.3"/><path d="M226,10.2H228M230,10.2H232" stroke="#4b4560" stroke-width="0.9"/><circle cx="233" cy="18.2" r="3.1" fill="#fff" stroke="#4b4560" stroke-width="1.1"/><path d="M232.2,19.1L233.9,17.2" stroke="#4b4560" stroke-width="0.8"/><path d="M233.3,4H240L236.65,7.6Z" fill="#111"/></svg><div class="a" style="left:249px;top:616px;width:333px;height:242px;border:1px solid #a0a0a0;background:#fff"></div><div class="a" style="left:250px;top:617px;width:332px;height:28px;background:#f0f0f0;border-bottom:1px solid #9a9a9a"></div><div class="a" style="left:250px;top:645px;width:12px;height:212px;background:#eeeeee"></div><div class="a" style="left:261px;top:617px;width:1px;height:28px;background:#c4c4c4"></div><div class="a" style="left:361px;top:617px;width:1px;height:28px;background:#c4c4c4"></div><div class="a" style="left:424px;top:617px;width:1px;height:28px;background:#c4c4c4"></div><div class="a" style="left:503px;top:617px;width:1px;height:28px;background:#c4c4c4"></div><div class="a" style="left:261px;top:645px;width:1px;height:212px;background:#a0a0a0"></div><svg class="a" style="left:250px;top:626px;" width="11" height="11" viewBox="0 0 11 11"><circle cx="5.5" cy="5.5" r="2.5" fill="#f08a1a"/><path d="M5.5,5.5 L10.50,5.50" stroke="#f08a1a" stroke-width="1"/><path d="M5.5,5.5 L9.04,9.03" stroke="#f08a1a" stroke-width="1"/><path d="M5.5,5.5 L5.50,10.50" stroke="#f08a1a" stroke-width="1"/><path d="M5.5,5.5 L1.97,9.04" stroke="#f08a1a" stroke-width="1"/><path d="M5.5,5.5 L0.50,5.51" stroke="#f08a1a" stroke-width="1"/><path d="M5.5,5.5 L1.96,1.97" stroke="#f08a1a" stroke-width="1"/><path d="M5.5,5.5 L5.49,0.50" stroke="#f08a1a" stroke-width="1"/><path d="M5.5,5.5 L9.03,1.95" stroke="#f08a1a" stroke-width="1"/></svg><div class="t" style="left:269px;top:626.27px;font-size:11.5px;font-weight:400;color:#1e1e1e;transform:scaleX(0.9809);transform-origin:0 0;">Event Type</div><div class="t" style="left:370px;top:626.27px;font-size:11.5px;font-weight:400;color:#1e1e1e;transform:scaleX(0.9809);transform-origin:0 0;">Calibr</div><div class="t" style="left:433.5px;top:626.27px;font-size:11.5px;font-weight:400;color:#1e1e1e;transform:scaleX(0.9809);transform-origin:0 0;width:48px;overflow:hidden">Calibration</div><div class="t" style="left:512px;top:626.27px;font-size:11.5px;font-weight:400;color:#1e1e1e;transform:scaleX(0.9809);transform-origin:0 0;">Entered By</div><svg class="a" style="left:406px;top:627px;" width="9" height="9" viewBox="0 0 9 9"><path d="M0,1.5H3M0,3.5H5M0,5.5H7M0,7.5H9" stroke="#555" stroke-width="1"/></svg><svg class="a" style="left:485px;top:627px;" width="9" height="9" viewBox="0 0 9 9"><path d="M0,1.5H3M0,3.5H5M0,5.5H7M0,7.5H9" stroke="#555" stroke-width="1"/></svg><div class="a" style="left:262px;top:645px;width:320px;height:22px;background:#f4f4f9"></div><div class="a" style="left:250px;top:666px;width:12px;height:1px;background:#a0a0a0"></div><div class="a" style="left:262px;top:666px;width:320px;height:1px;background:#e6e6ea"></div><div class="a" style="left:361px;top:645px;width:1px;height:22px;background:#e2e2e6"></div><div class="a" style="left:424px;top:645px;width:1px;height:22px;background:#e2e2e6"></div><div class="a" style="left:503px;top:645px;width:1px;height:22px;background:#e2e2e6"></div><div class="t" style="left:266.5px;top:651.27px;font-size:11.5px;font-weight:400;color:#1e1e1e;transform:scaleX(0.9809);transform-origin:0 0;">Calibration</div><div class="t" style="left:366px;top:651.27px;font-size:11.5px;font-weight:400;color:#1e1e1e;transform:scaleX(0.9809);transform-origin:0 0;">3/30/2023</div><div class="t" style="left:429.5px;top:651.27px;font-size:11.5px;font-weight:400;color:#1e1e1e;transform:scaleX(0.887);transform-origin:0 0;">12:42:00 PM</div><div class="t" style="left:508px;top:651.27px;font-size:11.5px;font-weight:400;color:#1e1e1e;transform:scaleX(0.887);transform-origin:0 0;">INDYSOFT</div><div class="a" style="left:262px;top:667px;width:320px;height:22px;background:#ffffff"></div><div class="a" style="left:250px;top:688px;width:12px;height:1px;background:#a0a0a0"></div><div class="a" style="left:262px;top:688px;width:320px;height:1px;background:#e6e6ea"></div><div class="a" style="left:361px;top:667px;width:1px;height:22px;background:#e2e2e6"></div><div class="a" style="left:424px;top:667px;width:1px;height:22px;background:#e2e2e6"></div><div class="a" style="left:503px;top:667px;width:1px;height:22px;background:#e2e2e6"></div><div class="t" style="left:266.5px;top:673.27px;font-size:11.5px;font-weight:400;color:#1e1e1e;transform:scaleX(0.9809);transform-origin:0 0;">Test Cal</div><div class="t" style="left:366px;top:673.27px;font-size:11.5px;font-weight:400;color:#1e1e1e;transform:scaleX(0.9809);transform-origin:0 0;">3/31/2023</div><div class="t" style="left:429.5px;top:673.27px;font-size:11.5px;font-weight:400;color:#1e1e1e;transform:scaleX(0.887);transform-origin:0 0;">9:48:10 AM</div><div class="t" style="left:508px;top:673.27px;font-size:11.5px;font-weight:400;color:#1e1e1e;transform:scaleX(0.887);transform-origin:0 0;">INDYSOFT</div><div class="a" style="left:262px;top:689px;width:320px;height:22px;background:#f4f4f9"></div><div class="a" style="left:250px;top:710px;width:12px;height:1px;background:#a0a0a0"></div><div class="a" style="left:262px;top:710px;width:320px;height:1px;background:#e6e6ea"></div><div class="a" style="left:361px;top:689px;width:1px;height:22px;background:#e2e2e6"></div><div class="a" style="left:424px;top:689px;width:1px;height:22px;background:#e2e2e6"></div><div class="a" style="left:503px;top:689px;width:1px;height:22px;background:#e2e2e6"></div><div class="t" style="left:266.5px;top:695.27px;font-size:11.5px;font-weight:400;color:#1e1e1e;transform:scaleX(0.9809);transform-origin:0 0;">Calibration</div><div class="t" style="left:366px;top:695.27px;font-size:11.5px;font-weight:400;color:#1e1e1e;transform:scaleX(0.9809);transform-origin:0 0;">3/31/2023</div><div class="t" style="left:429.5px;top:695.27px;font-size:11.5px;font-weight:400;color:#1e1e1e;transform:scaleX(0.887);transform-origin:0 0;">9:48:52 AM</div><div class="t" style="left:508px;top:695.27px;font-size:11.5px;font-weight:400;color:#1e1e1e;transform:scaleX(0.887);transform-origin:0 0;">INDYSOFT</div><div class="a" style="left:262px;top:711px;width:320px;height:22px;background:#ffffff"></div><div class="a" style="left:250px;top:732px;width:12px;height:1px;background:#a0a0a0"></div><div class="a" style="left:262px;top:732px;width:320px;height:1px;background:#e6e6ea"></div><div class="a" style="left:361px;top:711px;width:1px;height:22px;background:#e2e2e6"></div><div class="a" style="left:424px;top:711px;width:1px;height:22px;background:#e2e2e6"></div><div class="a" style="left:503px;top:711px;width:1px;height:22px;background:#e2e2e6"></div><div class="t" style="left:266.5px;top:717.27px;font-size:11.5px;font-weight:400;color:#1e1e1e;transform:scaleX(0.9809);transform-origin:0 0;">Calibration</div><div class="t" style="left:366px;top:717.27px;font-size:11.5px;font-weight:400;color:#1e1e1e;transform:scaleX(0.9809);transform-origin:0 0;">3/31/2023</div><div class="t" style="left:429.5px;top:717.27px;font-size:11.5px;font-weight:400;color:#1e1e1e;transform:scaleX(0.887);transform-origin:0 0;">9:53:48 AM</div><div class="t" style="left:508px;top:717.27px;font-size:11.5px;font-weight:400;color:#1e1e1e;transform:scaleX(0.887);transform-origin:0 0;">INDYSOFT</div><div class="a" style="left:262px;top:733px;width:320px;height:22px;background:#f4f4f9"></div><div class="a" style="left:250px;top:754px;width:12px;height:1px;background:#a0a0a0"></div><div class="a" style="left:262px;top:754px;width:320px;height:1px;background:#e6e6ea"></div><div class="a" style="left:361px;top:733px;width:1px;height:22px;background:#e2e2e6"></div><div class="a" style="left:424px;top:733px;width:1px;height:22px;background:#e2e2e6"></div><div class="a" style="left:503px;top:733px;width:1px;height:22px;background:#e2e2e6"></div><div class="t" style="left:266.5px;top:739.27px;font-size:11.5px;font-weight:400;color:#1e1e1e;transform:scaleX(0.9809);transform-origin:0 0;">Calibration</div><div class="t" style="left:366px;top:739.27px;font-size:11.5px;font-weight:400;color:#1e1e1e;transform:scaleX(0.9809);transform-origin:0 0;">3/31/2023</div><div class="t" style="left:429.5px;top:739.27px;font-size:11.5px;font-weight:400;color:#1e1e1e;transform:scaleX(0.887);transform-origin:0 0;">9:56:43 AM</div><div class="t" style="left:508px;top:739.27px;font-size:11.5px;font-weight:400;color:#1e1e1e;transform:scaleX(0.887);transform-origin:0 0;">INDYSOFT</div><div class="a" style="left:262px;top:755px;width:320px;height:22px;background:#ffffff"></div><div class="a" style="left:250px;top:776px;width:12px;height:1px;background:#a0a0a0"></div><div class="a" style="left:262px;top:776px;width:320px;height:1px;background:#e6e6ea"></div><div class="a" style="left:361px;top:755px;width:1px;height:22px;background:#e2e2e6"></div><div class="a" style="left:424px;top:755px;width:1px;height:22px;background:#e2e2e6"></div><div class="a" style="left:503px;top:755px;width:1px;height:22px;background:#e2e2e6"></div><div class="t" style="left:266.5px;top:761.27px;font-size:11.5px;font-weight:400;color:#1e1e1e;transform:scaleX(0.9809);transform-origin:0 0;">Calibration</div><div class="t" style="left:366px;top:761.27px;font-size:11.5px;font-weight:400;color:#1e1e1e;transform:scaleX(0.9809);transform-origin:0 0;">5/1/2023</div><div class="t" style="left:429.5px;top:761.27px;font-size:11.5px;font-weight:400;color:#1e1e1e;transform:scaleX(0.887);transform-origin:0 0;">11:24:39 AM</div><div class="t" style="left:508px;top:761.27px;font-size:11.5px;font-weight:400;color:#1e1e1e;transform:scaleX(0.887);transform-origin:0 0;">INDYSOFT</div><div class="a" style="left:262px;top:777px;width:320px;height:22px;background:#f4f4f9"></div><div class="a" style="left:250px;top:798px;width:12px;height:1px;background:#a0a0a0"></div><div class="a" style="left:262px;top:798px;width:320px;height:1px;background:#e6e6ea"></div><div class="a" style="left:361px;top:777px;width:1px;height:22px;background:#e2e2e6"></div><div class="a" style="left:424px;top:777px;width:1px;height:22px;background:#e2e2e6"></div><div class="a" style="left:503px;top:777px;width:1px;height:22px;background:#e2e2e6"></div><div class="t" style="left:266.5px;top:783.27px;font-size:11.5px;font-weight:400;color:#1e1e1e;transform:scaleX(0.9809);transform-origin:0 0;">Calibration</div><div class="t" style="left:366px;top:783.27px;font-size:11.5px;font-weight:400;color:#1e1e1e;transform:scaleX(0.9809);transform-origin:0 0;">5/1/2023</div><div class="t" style="left:429.5px;top:783.27px;font-size:11.5px;font-weight:400;color:#1e1e1e;transform:scaleX(0.887);transform-origin:0 0;">11:27:34 AM</div><div class="t" style="left:508px;top:783.27px;font-size:11.5px;font-weight:400;color:#1e1e1e;transform:scaleX(0.887);transform-origin:0 0;">INDYSOFT</div><div class="a" style="left:262px;top:799px;width:320px;height:22px;background:#ffffff"></div><div class="a" style="left:250px;top:820px;width:12px;height:1px;background:#a0a0a0"></div><div class="a" style="left:262px;top:820px;width:320px;height:1px;background:#e6e6ea"></div><div class="a" style="left:361px;top:799px;width:1px;height:22px;background:#e2e2e6"></div><div class="a" style="left:424px;top:799px;width:1px;height:22px;background:#e2e2e6"></div><div class="a" style="left:503px;top:799px;width:1px;height:22px;background:#e2e2e6"></div><div class="t" style="left:266.5px;top:805.27px;font-size:11.5px;font-weight:400;color:#1e1e1e;transform:scaleX(0.9809);transform-origin:0 0;">Calibration</div><div class="t" style="left:366px;top:805.27px;font-size:11.5px;font-weight:400;color:#1e1e1e;transform:scaleX(0.9809);transform-origin:0 0;">5/1/2023</div><div class="t" style="left:429.5px;top:805.27px;font-size:11.5px;font-weight:400;color:#1e1e1e;transform:scaleX(0.887);transform-origin:0 0;">11:29:33 AM</div><div class="t" style="left:508px;top:805.27px;font-size:11.5px;font-weight:400;color:#1e1e1e;transform:scaleX(0.887);transform-origin:0 0;">INDYSOFT</div><div class="a" style="left:262px;top:821px;width:320px;height:22px;background:#f4f4f9"></div><div class="a" style="left:250px;top:842px;width:12px;height:1px;background:#a0a0a0"></div><div class="a" style="left:262px;top:842px;width:320px;height:1px;background:#e6e6ea"></div><div class="a" style="left:361px;top:821px;width:1px;height:22px;background:#e2e2e6"></div><div class="a" style="left:424px;top:821px;width:1px;height:22px;background:#e2e2e6"></div><div class="a" style="left:503px;top:821px;width:1px;height:22px;background:#e2e2e6"></div><div class="t" style="left:266.5px;top:827.27px;font-size:11.5px;font-weight:400;color:#1e1e1e;transform:scaleX(0.9809);transform-origin:0 0;">Calibration</div><div class="t" style="left:366px;top:827.27px;font-size:11.5px;font-weight:400;color:#1e1e1e;transform:scaleX(0.9809);transform-origin:0 0;">5/1/2023</div><div class="t" style="left:429.5px;top:827.27px;font-size:11.5px;font-weight:400;color:#1e1e1e;transform:scaleX(0.887);transform-origin:0 0;">11:42:45 AM</div><div class="t" style="left:508px;top:827.27px;font-size:11.5px;font-weight:400;color:#1e1e1e;transform:scaleX(0.887);transform-origin:0 0;">INDYSOFT</div><div class="a" style="left:262px;top:843px;width:320px;height:14px;background:#d4d4d4;border-top:1px solid #222;border-left:1px solid #222"></div><svg class="a" style="left:254px;top:849px;" width="5" height="8" viewBox="0 0 5 8"><path d="M0,0L4,4L0,8Z" fill="#666"/></svg><div class="a" style="left:361px;top:843px;width:1px;height:13px;background:#e2e2e6"></div><div class="a" style="left:424px;top:843px;width:1px;height:13px;background:#e2e2e6"></div><div class="a" style="left:503px;top:843px;width:1px;height:13px;background:#e2e2e6"></div><div class="t" style="left:266.5px;top:849.27px;font-size:11.5px;font-weight:400;color:#1e1e1e;transform:scaleX(0.9809);transform-origin:0 0;">Calibration</div><div class="t" style="left:366px;top:849.27px;font-size:11.5px;font-weight:400;color:#1e1e1e;transform:scaleX(0.9809);transform-origin:0 0;">5/1/2023</div><div class="t" style="left:429.5px;top:849.27px;font-size:11.5px;font-weight:400;color:#1e1e1e;transform:scaleX(0.887);transform-origin:0 0;">11:43:44 AM</div><div class="t" style="left:508px;top:849.27px;font-size:11.5px;font-weight:400;color:#1e1e1e;transform:scaleX(0.887);transform-origin:0 0;">INDYSOFT</div><div class="a" style="left:249px;top:857px;width:333px;height:1px;background:#a0a0a0"></div><div class="a" style="left:242px;top:858px;width:340px;height:10px;background:#ffffff"></div><div class="a" style="left:247px;top:859px;width:335px;height:1px;background:#c8c8c8"></div><div class="a" style="left:242px;top:864px;width:340px;height:4px;background:#f7f8fa"></div><div class="a" style="left:572px;top:304px;width:728px;height:557px;border:1px solid #a8a8a8;border-radius:8px;background:#f7f8fa;box-shadow:-4px 6px 22px rgba(0,0,0,0.28);overflow:hidden"><div class="a" style="left:0;top:0;width:728px;height:29px;background:#efefef"></div></div><svg class="a" style="left:576px;top:311px;" width="16" height="16" viewBox="0 0 16 16"><path d="M12.41,4.30 A5.76,5.76 0 0 0 3.59,4.30" fill="none" stroke="#e2509e" stroke-width="4.48"/><path d="M3.59,4.30 A5.76,5.76 0 0 0 3.59,11.70" fill="none" stroke="#6a55a8" stroke-width="4.48"/><path d="M3.59,11.70 A5.76,5.76 0 0 0 12.41,11.70" fill="none" stroke="#0fc0e2" stroke-width="4.48"/><path d="M2.32,8.00 L8.40,5.84 A2.16,2.16 0 1,1 8.40,10.16 Z" fill="#c6c5ca"/></svg><div class="t" style="left:596px;top:313.27px;font-size:11.5px;font-weight:400;color:#5c5c5c;transform:scaleX(0.9809);transform-origin:0 0;">Customize</div><svg class="a" style="left:1271px;top:313px;" width="12" height="12" viewBox="0 0 12 12"><path d="M1,1L11,11M11,1L1,11" stroke="#6a6a6a" stroke-width="1.1"/></svg><svg class="a" style="left:580px;top:342px;" width="17" height="16" viewBox="0 0 17 16"><path d="M14.5,14.5 C14.5,9 11,6.5 6,6.5 L6,3 L1,8 L6,13 L6,9.5 C10,9.5 12.5,11 14.5,14.5Z" fill="#3da63a" stroke="#1f6e1f" stroke-width="0.8" stroke-linejoin="round"/></svg><svg class="a" style="left:604px;top:342px;" width="17" height="16" viewBox="0 0 17 16"><path d="M2.5,14.5 C2.5,9 6,6.5 11,6.5 L11,3 L16,8 L11,13 L11,9.5 C7,9.5 4.5,11 2.5,14.5Z" fill="#b8b8b8" stroke="#8a8a8a" stroke-width="0.8" stroke-linejoin="round"/></svg><div class="a" style="left:627px;top:339px;width:1px;height:23px;background:#b8b8b8"></div><svg class="a" style="left:634px;top:343px;" width="15" height="15" viewBox="0 0 15 15"><path d="M0.5,0.5H12L14.5,3V14.5H0.5Z" fill="#3a78c8" stroke="#1c4f94" stroke-width="1"/><rect x="3.5" y="1" width="7.5" height="5" fill="#f0f0f0"/><path d="M4.5,2.5H10M4.5,4.5H10" stroke="#555" stroke-width="0.7"/><rect x="4" y="9" width="8" height="5" fill="#222"/><rect x="4" y="9" width="2" height="5" fill="#5a90d0"/></svg><svg class="a" style="left:657px;top:343px;" width="16" height="16" viewBox="0 0 16 16"><path d="M4,3.5 A6,6 0 1,1 2.5,9" fill="none" stroke="#a8a8a8" stroke-width="2.4"/><path d="M1,1L6.5,1.5L2,6.5Z" fill="#a8a8a8"/></svg><div class="a" style="left:578px;top:366px;width:349px;height:459px;background:#fff;border:1px solid #b0b0b0"></div><div class="a" style="left:578px;top:366px;width:349px;height:26px;background:#6852a2;border:1px solid #8b8b8b;border-bottom:1px solid #888"></div><div class="t" style="left:588px;top:373.27px;font-size:11.5px;font-weight:700;color:#ffffff;transform:scaleX(0.9183);transform-origin:0 0;"><u>L</u>ayout Tree View</div><div class="a" style="left:947px;top:366px;width:347px;height:459px;background:#fff;border:1px solid #b0b0b0"></div><div class="a" style="left:947px;top:366px;width:347px;height:26px;background:#6852a2;border:1px solid #8b8b8b;border-bottom:1px solid #888"></div><div class="t" style="left:957px;top:373.27px;font-size:11.5px;font-weight:700;color:#ffffff;transform:scaleX(0.9183);transform-origin:0 0;"><u>A</u>vailable Items</div><div class="t" style="left:931.5px;top:588.84px;font-size:12px;font-weight:400;color:#333;">&#8942;</div><svg class="a" style="left:596px;top:412px;" width="16" height="16" viewBox="0 0 16 16"><defs><radialGradient id="gg604_420" cx="45%" cy="35%" r="70%"><stop offset="0" stop-color="#5cc84a"/><stop offset="0.6" stop-color="#279a1f"/><stop offset="1" stop-color="#106010"/></radialGradient></defs><circle cx="8" cy="8" r="6.7" fill="url(#gg604_420)" stroke="#0f5a0f" stroke-width="0.6"/><path d="M5.4,5.4 L8,7.6 L10.6,5.4 M5.4,8.4 L8,10.6 L10.6,8.4" fill="none" stroke="#fff" stroke-width="1.4"/></svg><svg class="a" style="left:619px;top:412px;" width="16" height="16" viewBox="0 0 16 16"><defs><radialGradient id="gg627_420" cx="45%" cy="35%" r="70%"><stop offset="0" stop-color="#5cc84a"/><stop offset="0.6" stop-color="#279a1f"/><stop offset="1" stop-color="#106010"/></radialGradient></defs><circle cx="8" cy="8" r="6.7" fill="url(#gg627_420)" stroke="#0f5a0f" stroke-width="0.6"/><path d="M5.4,7.6 L8,5.4 L10.6,7.6 M5.4,10.6 L8,8.4 L10.6,10.6" fill="none" stroke="#fff" stroke-width="1.4"/></svg><div class="a" style="left:642px;top:409px;width:1px;height:22px;background:#c0c0c0"></div><svg class="a" style="left:649px;top:413px;" width="14" height="14" viewBox="0 0 14 14"><path d="M2.8,2.8L11.2,11.2M11.2,2.8L2.8,11.2" stroke="#8c8c8c" stroke-width="3.3" stroke-linecap="round"/></svg><svg class="a" style="left:965px;top:412px;" width="16" height="16" viewBox="0 0 16 16"><defs><radialGradient id="gg973_420" cx="45%" cy="35%" r="70%"><stop offset="0" stop-color="#5cc84a"/><stop offset="0.6" stop-color="#279a1f"/><stop offset="1" stop-color="#106010"/></radialGradient></defs><circle cx="8" cy="8" r="6.7" fill="url(#gg973_420)" stroke="#0f5a0f" stroke-width="0.6"/><path d="M5.4,5.4 L8,7.6 L10.6,5.4 M5.4,8.4 L8,10.6 L10.6,8.4" fill="none" stroke="#fff" stroke-width="1.4"/></svg><svg class="a" style="left:988px;top:412px;" width="16" height="16" viewBox="0 0 16 16"><defs><radialGradient id="gg996_420" cx="45%" cy="35%" r="70%"><stop offset="0" stop-color="#5cc84a"/><stop offset="0.6" stop-color="#279a1f"/><stop offset="1" stop-color="#106010"/></radialGradient></defs><circle cx="8" cy="8" r="6.7" fill="url(#gg996_420)" stroke="#0f5a0f" stroke-width="0.6"/><path d="M5.4,7.6 L8,5.4 L10.6,7.6 M5.4,10.6 L8,8.4 L10.6,10.6" fill="none" stroke="#fff" stroke-width="1.4"/></svg><div class="a" style="left:1012px;top:409px;width:1px;height:22px;background:#c0c0c0"></div><div class="a" style="left:1087px;top:409px;width:1px;height:22px;background:#c0c0c0"></div><svg class="a" style="left:1065px;top:413px;" width="14" height="14" viewBox="0 0 14 14"><path d="M2.8,2.8L11.2,11.2M11.2,2.8L2.8,11.2" stroke="#8c8c8c" stroke-width="3.3" stroke-linecap="round"/></svg><div class="a" style="left:1089px;top:409px;width:23px;height:22px;background:#cddcf2;border:1px solid #9aa8be"></div><svg class="a" style="left:1092px;top:412px;" width="17" height="17" viewBox="0 0 17 17"><path d="M4,5V14H10M4,9H10" fill="none" stroke="#555" stroke-width="1"/><rect x="1" y="1" width="6" height="4" fill="#f5c050" stroke="#c08a20" stroke-width="0.7"/><rect x="9" y="6.5" width="6" height="4" fill="#f5c050" stroke="#c08a20" stroke-width="0.7"/><rect x="9" y="11.5" width="6" height="4" fill="#f5c050" stroke="#c08a20" stroke-width="0.7"/></svg><svg class="a" style="left:1018px;top:412px;" width="17" height="17" viewBox="0 0 17 17"><defs><radialGradient id="ga1" cx="50%" cy="35%" r="65%"><stop offset="0" stop-color="#b0d0ff"/><stop offset="0.6" stop-color="#3a78d0"/><stop offset="1" stop-color="#1a4a9a"/></radialGradient></defs><circle cx="10" cy="5.5" r="4.65" fill="url(#ga1)" stroke="#1a4a9a" stroke-width="0.7"/><ellipse cx="10" cy="3.4" rx="3.1" ry="1.7999999999999998" fill="#ffffff" fill-opacity="0.55"/><defs><radialGradient id="ga2" cx="50%" cy="35%" r="65%"><stop offset="0" stop-color="#9ae08a"/><stop offset="0.6" stop-color="#2a9a22"/><stop offset="1" stop-color="#136a10"/></radialGradient></defs><circle cx="6" cy="10" r="5.15" fill="url(#ga2)" stroke="#136a10" stroke-width="0.7"/><ellipse cx="6" cy="7.6899999999999995" rx="3.41" ry="1.98" fill="#ffffff" fill-opacity="0.55"/><path d="M12.5,9V16M9,12.5H16" stroke="#1e7a1e" stroke-width="3"/><path d="M12.5,9.8V15.2M9.8,12.5H15.2" stroke="#7fe05a" stroke-width="1.4"/></svg><svg class="a" style="left:1041px;top:412px;" width="17" height="17" viewBox="0 0 17 17"><defs><radialGradient id="oa1" cx="50%" cy="35%" r="65%"><stop offset="0" stop-color="#fff0c0"/><stop offset="0.6" stop-color="#f0a830"/><stop offset="1" stop-color="#b86a10"/></radialGradient></defs><circle cx="7" cy="7" r="5.95" fill="url(#oa1)" stroke="#b86a10" stroke-width="0.7"/><ellipse cx="7" cy="4.354" rx="3.9059999999999997" ry="2.268" fill="#ffffff" fill-opacity="0.55"/><path d="M12.5,9V16M9,12.5H16" stroke="#1e7a1e" stroke-width="3"/><path d="M12.5,9.8V15.2M9.8,12.5H15.2" stroke="#7fe05a" stroke-width="1.4"/></svg><div class="a" style="left:593px;top:436px;width:319px;height:371px;background:#fff;border:1px solid #a8a8a8"></div><div class="a" style="left:962px;top:436px;width:317px;height:371px;background:#fff;border:1px solid #a8a8a8"></div><div class="a" style="left:594px;top:437px;width:317px;height:369px;overflow:hidden"><div class="a" style="left:-594px;top:-437px;width:1303px;height:868px"><div class="a" style="left:621px;top:476px;width:1px;height:344px;background:repeating-linear-gradient(#b4b4b4 0 1px, transparent 1px 2px)"></div><div class="a" style="left:640px;top:496px;width:1px;height:324px;background:repeating-linear-gradient(#b4b4b4 0 1px, transparent 1px 2px)"></div><div class="a" style="left:659px;top:516px;width:1px;height:212px;background:repeating-linear-gradient(#b4b4b4 0 1px, transparent 1px 2px)"></div><div class="a" style="left:678px;top:536px;width:1px;height:92px;background:repeating-linear-gradient(#b4b4b4 0 1px, transparent 1px 2px)"></div><div class="a" style="left:697px;top:556px;width:1px;height:152px;background:repeating-linear-gradient(#b4b4b4 0 1px, transparent 1px 2px)"></div><div class="a" style="left:659px;top:776px;width:1px;height:44px;background:repeating-linear-gradient(#b4b4b4 0 1px, transparent 1px 2px)"></div><div class="a" style="left:678px;top:796px;width:1px;height:24px;background:repeating-linear-gradient(#b4b4b4 0 1px, transparent 1px 2px)"></div><div class="a" style="left:697px;top:816px;width:1px;height:4px;background:repeating-linear-gradient(#b4b4b4 0 1px, transparent 1px 2px)"></div><div class="a" style="left:698px;top:548px;width:7px;height:1px;background:repeating-linear-gradient(90deg,#b4b4b4 0 1px, transparent 1px 2px)"></div><div class="a" style="left:698px;top:568px;width:7px;height:1px;background:repeating-linear-gradient(90deg,#b4b4b4 0 1px, transparent 1px 2px)"></div><div class="a" style="left:698px;top:588px;width:7px;height:1px;background:repeating-linear-gradient(90deg,#b4b4b4 0 1px, transparent 1px 2px)"></div><div class="a" style="left:698px;top:608px;width:7px;height:1px;background:repeating-linear-gradient(90deg,#b4b4b4 0 1px, transparent 1px 2px)"></div><div class="a" style="left:698px;top:648px;width:7px;height:1px;background:repeating-linear-gradient(90deg,#b4b4b4 0 1px, transparent 1px 2px)"></div><div class="a" style="left:698px;top:668px;width:7px;height:1px;background:repeating-linear-gradient(90deg,#b4b4b4 0 1px, transparent 1px 2px)"></div><div class="a" style="left:698px;top:688px;width:7px;height:1px;background:repeating-linear-gradient(90deg,#b4b4b4 0 1px, transparent 1px 2px)"></div><div class="a" style="left:698px;top:708px;width:7px;height:1px;background:repeating-linear-gradient(90deg,#b4b4b4 0 1px, transparent 1px 2px)"></div><div class="a" style="left:660px;top:728px;width:7px;height:1px;background:repeating-linear-gradient(90deg,#b4b4b4 0 1px, transparent 1px 2px)"></div><div class="a" style="left:647px;top:478px;width:112px;height:20px;background:#d5d5d5"></div><svg class="a" style="left:597px;top:445px;" width="10" height="7" viewBox="0 0 10 7"><path d="M1,1L5,5L9,1" fill="none" stroke="#222" stroke-width="1.3"/></svg><svg class="a" style="left:611px;top:442px;" width="17" height="12" viewBox="0 0 17 12"><defs><radialGradient id="hb611_448" cx="50%" cy="35%" r="65%"><stop offset="0" stop-color="#a8c8f8"/><stop offset="0.6" stop-color="#3f7fd8"/><stop offset="1" stop-color="#1d4fa0"/></radialGradient></defs><circle cx="11" cy="6" r="4.8500000000000005" fill="url(#hb611_448)" stroke="#1d4fa0" stroke-width="0.7"/><ellipse cx="11" cy="3.816" rx="3.224" ry="1.8719999999999999" fill="#ffffff" fill-opacity="0.55"/><defs><radialGradient id="hg611_448" cx="50%" cy="35%" r="65%"><stop offset="0" stop-color="#8ad07a"/><stop offset="0.6" stop-color="#2a9a22"/><stop offset="1" stop-color="#106010"/></radialGradient></defs><circle cx="6" cy="6" r="4.8500000000000005" fill="url(#hg611_448)" stroke="#106010" stroke-width="0.7"/><ellipse cx="6" cy="3.816" rx="3.224" ry="1.8719999999999999" fill="#ffffff" fill-opacity="0.55"/></svg><div class="t" style="left:631px;top:443.27px;font-size:11.5px;font-weight:400;color:#1c1c1c;transform:scaleX(0.9809);transform-origin:0 0;">Root</div><svg class="a" style="left:616px;top:465px;" width="10" height="7" viewBox="0 0 10 7"><path d="M1,1L5,5L9,1" fill="none" stroke="#222" stroke-width="1.3"/></svg><svg class="a" style="left:632px;top:459px;" width="12" height="18" viewBox="0 0 12 18"><defs><radialGradient id="vb630_468" cx="50%" cy="35%" r="65%"><stop offset="0" stop-color="#a8c8f8"/><stop offset="0.6" stop-color="#3f7fd8"/><stop offset="1" stop-color="#1d4fa0"/></radialGradient></defs><circle cx="6" cy="5.5" r="4.65" fill="url(#vb630_468)" stroke="#1d4fa0" stroke-width="0.7"/><ellipse cx="6" cy="3.4" rx="3.1" ry="1.7999999999999998" fill="#ffffff" fill-opacity="0.55"/><defs><radialGradient id="vg630_468" cx="50%" cy="35%" r="65%"><stop offset="0" stop-color="#8ad07a"/><stop offset="0.6" stop-color="#2a9a22"/><stop offset="1" stop-color="#106010"/></radialGradient></defs><circle cx="6" cy="11.5" r="4.8500000000000005" fill="url(#vg630_468)" stroke="#106010" stroke-width="0.7"/><ellipse cx="6" cy="9.315999999999999" rx="3.224" ry="1.8719999999999999" fill="#ffffff" fill-opacity="0.55"/></svg><div class="t" style="left:650px;top:463.27px;font-size:11.5px;font-weight:400;color:#1c1c1c;transform:scaleX(0.9809);transform-origin:0 0;">Left Column</div><svg class="a" style="left:635px;top:485px;" width="10" height="7" viewBox="0 0 10 7"><path d="M1,1L5,5L9,1" fill="none" stroke="#222" stroke-width="1.3"/></svg><svg class="a" style="left:651px;top:479px;" width="12" height="18" viewBox="0 0 12 18"><defs><radialGradient id="vb649_488" cx="50%" cy="35%" r="65%"><stop offset="0" stop-color="#a8c8f8"/><stop offset="0.6" stop-color="#3f7fd8"/><stop offset="1" stop-color="#1d4fa0"/></radialGradient></defs><circle cx="6" cy="5.5" r="4.65" fill="url(#vb649_488)" stroke="#1d4fa0" stroke-width="0.7"/><ellipse cx="6" cy="3.4" rx="3.1" ry="1.7999999999999998" fill="#ffffff" fill-opacity="0.55"/><defs><radialGradient id="vg649_488" cx="50%" cy="35%" r="65%"><stop offset="0" stop-color="#8ad07a"/><stop offset="0.6" stop-color="#2a9a22"/><stop offset="1" stop-color="#106010"/></radialGradient></defs><circle cx="6" cy="11.5" r="4.8500000000000005" fill="url(#vg649_488)" stroke="#106010" stroke-width="0.7"/><ellipse cx="6" cy="9.315999999999999" rx="3.224" ry="1.8719999999999999" fill="#ffffff" fill-opacity="0.55"/></svg><div class="t" style="left:669px;top:483.27px;font-size:11.5px;font-weight:400;color:#1c1c1c;transform:scaleX(0.9809);transform-origin:0 0;">Asset Descriptors</div><svg class="a" style="left:654px;top:505px;" width="10" height="7" viewBox="0 0 10 7"><path d="M1,1L5,5L9,1" fill="none" stroke="#222" stroke-width="1.3"/></svg><svg class="a" style="left:668px;top:502px;" width="17" height="12" viewBox="0 0 17 12"><defs><radialGradient id="hb668_508" cx="50%" cy="35%" r="65%"><stop offset="0" stop-color="#a8c8f8"/><stop offset="0.6" stop-color="#3f7fd8"/><stop offset="1" stop-color="#1d4fa0"/></radialGradient></defs><circle cx="11" cy="6" r="4.8500000000000005" fill="url(#hb668_508)" stroke="#1d4fa0" stroke-width="0.7"/><ellipse cx="11" cy="3.816" rx="3.224" ry="1.8719999999999999" fill="#ffffff" fill-opacity="0.55"/><defs><radialGradient id="hg668_508" cx="50%" cy="35%" r="65%"><stop offset="0" stop-color="#8ad07a"/><stop offset="0.6" stop-color="#2a9a22"/><stop offset="1" stop-color="#106010"/></radialGradient></defs><circle cx="6" cy="6" r="4.8500000000000005" fill="url(#hg668_508)" stroke="#106010" stroke-width="0.7"/><ellipse cx="6" cy="3.816" rx="3.224" ry="1.8719999999999999" fill="#ffffff" fill-opacity="0.55"/></svg><div class="t" style="left:688px;top:503.27px;font-size:11.5px;font-weight:400;color:#1c1c1c;transform:scaleX(0.9809);transform-origin:0 0;">Asset Descriptors - Left and Right Columns</div><svg class="a" style="left:673px;top:525px;" width="10" height="7" viewBox="0 0 10 7"><path d="M1,1L5,5L9,1" fill="none" stroke="#222" stroke-width="1.3"/></svg><svg class="a" style="left:689px;top:519px;" width="12" height="18" viewBox="0 0 12 18"><defs><radialGradient id="vb687_528" cx="50%" cy="35%" r="65%"><stop offset="0" stop-color="#a8c8f8"/><stop offset="0.6" stop-color="#3f7fd8"/><stop offset="1" stop-color="#1d4fa0"/></radialGradient></defs><circle cx="6" cy="5.5" r="4.65" fill="url(#vb687_528)" stroke="#1d4fa0" stroke-width="0.7"/><ellipse cx="6" cy="3.4" rx="3.1" ry="1.7999999999999998" fill="#ffffff" fill-opacity="0.55"/><defs><radialGradient id="vg687_528" cx="50%" cy="35%" r="65%"><stop offset="0" stop-color="#8ad07a"/><stop offset="0.6" stop-color="#2a9a22"/><stop offset="1" stop-color="#106010"/></radialGradient></defs><circle cx="6" cy="11.5" r="4.8500000000000005" fill="url(#vg687_528)" stroke="#106010" stroke-width="0.7"/><ellipse cx="6" cy="9.315999999999999" rx="3.224" ry="1.8719999999999999" fill="#ffffff" fill-opacity="0.55"/></svg><div class="t" style="left:707px;top:523.27px;font-size:11.5px;font-weight:400;color:#1c1c1c;transform:scaleX(0.9809);transform-origin:0 0;">Asset Descriptors - Left Column</div><svg class="a" style="left:707px;top:541px;" width="14" height="14" viewBox="0 0 14 14"><defs><radialGradient id="bb714_548" cx="50%" cy="35%" r="65%"><stop offset="0" stop-color="#a8c8f8"/><stop offset="0.6" stop-color="#3f7fd8"/><stop offset="1" stop-color="#1d4fa0"/></radialGradient></defs><circle cx="7" cy="7" r="5.65" fill="url(#bb714_548)" stroke="#1d4fa0" stroke-width="0.7"/><ellipse cx="7" cy="4.48" rx="3.7199999999999998" ry="2.16" fill="#ffffff" fill-opacity="0.55"/></svg><div class="t" style="left:726px;top:543.27px;font-size:11.5px;font-weight:400;color:#1c1c1c;transform:scaleX(0.9809);transform-origin:0 0;">Serial Number</div><svg class="a" style="left:707px;top:561px;" width="14" height="14" viewBox="0 0 14 14"><defs><radialGradient id="bb714_568" cx="50%" cy="35%" r="65%"><stop offset="0" stop-color="#a8c8f8"/><stop offset="0.6" stop-color="#3f7fd8"/><stop offset="1" stop-color="#1d4fa0"/></radialGradient></defs><circle cx="7" cy="7" r="5.65" fill="url(#bb714_568)" stroke="#1d4fa0" stroke-width="0.7"/><ellipse cx="7" cy="4.48" rx="3.7199999999999998" ry="2.16" fill="#ffffff" fill-opacity="0.55"/></svg><div class="t" style="left:726px;top:563.27px;font-size:11.5px;font-weight:400;color:#1c1c1c;transform:scaleX(0.9809);transform-origin:0 0;">Manufacturer</div><svg class="a" style="left:707px;top:581px;" width="14" height="14" viewBox="0 0 14 14"><defs><radialGradient id="bb714_588" cx="50%" cy="35%" r="65%"><stop offset="0" stop-color="#a8c8f8"/><stop offset="0.6" stop-color="#3f7fd8"/><stop offset="1" stop-color="#1d4fa0"/></radialGradient></defs><circle cx="7" cy="7" r="5.65" fill="url(#bb714_588)" stroke="#1d4fa0" stroke-width="0.7"/><ellipse cx="7" cy="4.48" rx="3.7199999999999998" ry="2.16" fill="#ffffff" fill-opacity="0.55"/></svg><div class="t" style="left:726px;top:583.27px;font-size:11.5px;font-weight:400;color:#1c1c1c;transform:scaleX(0.9809);transform-origin:0 0;">Model Number</div><svg class="a" style="left:707px;top:601px;" width="14" height="14" viewBox="0 0 14 14"><defs><radialGradient id="bb714_608" cx="50%" cy="35%" r="65%"><stop offset="0" stop-color="#a8c8f8"/><stop offset="0.6" stop-color="#3f7fd8"/><stop offset="1" stop-color="#1d4fa0"/></radialGradient></defs><circle cx="7" cy="7" r="5.65" fill="url(#bb714_608)" stroke="#1d4fa0" stroke-width="0.7"/><ellipse cx="7" cy="4.48" rx="3.7199999999999998" ry="2.16" fill="#ffffff" fill-opacity="0.55"/></svg><div class="t" style="left:726px;top:603.27px;font-size:11.5px;font-weight:400;color:#1c1c1c;transform:scaleX(0.9809);transform-origin:0 0;">Image Name</div><svg class="a" style="left:673px;top:625px;" width="10" height="7" viewBox="0 0 10 7"><path d="M1,1L5,5L9,1" fill="none" stroke="#222" stroke-width="1.3"/></svg><svg class="a" style="left:689px;top:619px;" width="12" height="18" viewBox="0 0 12 18"><defs><radialGradient id="vb687_628" cx="50%" cy="35%" r="65%"><stop offset="0" stop-color="#a8c8f8"/><stop offset="0.6" stop-color="#3f7fd8"/><stop offset="1" stop-color="#1d4fa0"/></radialGradient></defs><circle cx="6" cy="5.5" r="4.65" fill="url(#vb687_628)" stroke="#1d4fa0" stroke-width="0.7"/><ellipse cx="6" cy="3.4" rx="3.1" ry="1.7999999999999998" fill="#ffffff" fill-opacity="0.55"/><defs><radialGradient id="vg687_628" cx="50%" cy="35%" r="65%"><stop offset="0" stop-color="#8ad07a"/><stop offset="0.6" stop-color="#2a9a22"/><stop offset="1" stop-color="#106010"/></radialGradient></defs><circle cx="6" cy="11.5" r="4.8500000000000005" fill="url(#vg687_628)" stroke="#106010" stroke-width="0.7"/><ellipse cx="6" cy="9.315999999999999" rx="3.224" ry="1.8719999999999999" fill="#ffffff" fill-opacity="0.55"/></svg><div class="t" style="left:707px;top:623.27px;font-size:11.5px;font-weight:400;color:#1c1c1c;transform:scaleX(0.9809);transform-origin:0 0;">Asset Descriptors - Right Column</div><svg class="a" style="left:707px;top:641px;" width="14" height="14" viewBox="0 0 14 14"><defs><radialGradient id="bb714_648" cx="50%" cy="35%" r="65%"><stop offset="0" stop-color="#a8c8f8"/><stop offset="0.6" stop-color="#3f7fd8"/><stop offset="1" stop-color="#1d4fa0"/></radialGradient></defs><circle cx="7" cy="7" r="5.65" fill="url(#bb714_648)" stroke="#1d4fa0" stroke-width="0.7"/><ellipse cx="7" cy="4.48" rx="3.7199999999999998" ry="2.16" fill="#ffffff" fill-opacity="0.55"/></svg><div class="t" style="left:726px;top:643.27px;font-size:11.5px;font-weight:400;color:#1c1c1c;transform:scaleX(0.9809);transform-origin:0 0;">Department</div><svg class="a" style="left:707px;top:661px;" width="14" height="14" viewBox="0 0 14 14"><defs><radialGradient id="bb714_668" cx="50%" cy="35%" r="65%"><stop offset="0" stop-color="#a8c8f8"/><stop offset="0.6" stop-color="#3f7fd8"/><stop offset="1" stop-color="#1d4fa0"/></radialGradient></defs><circle cx="7" cy="7" r="5.65" fill="url(#bb714_668)" stroke="#1d4fa0" stroke-width="0.7"/><ellipse cx="7" cy="4.48" rx="3.7199999999999998" ry="2.16" fill="#ffffff" fill-opacity="0.55"/></svg><div class="t" style="left:726px;top:663.27px;font-size:11.5px;font-weight:400;color:#1c1c1c;transform:scaleX(0.9809);transform-origin:0 0;">Type</div><svg class="a" style="left:707px;top:681px;" width="14" height="14" viewBox="0 0 14 14"><defs><radialGradient id="bb714_688" cx="50%" cy="35%" r="65%"><stop offset="0" stop-color="#a8c8f8"/><stop offset="0.6" stop-color="#3f7fd8"/><stop offset="1" stop-color="#1d4fa0"/></radialGradient></defs><circle cx="7" cy="7" r="5.65" fill="url(#bb714_688)" stroke="#1d4fa0" stroke-width="0.7"/><ellipse cx="7" cy="4.48" rx="3.7199999999999998" ry="2.16" fill="#ffffff" fill-opacity="0.55"/></svg><div class="t" style="left:726px;top:683.27px;font-size:11.5px;font-weight:400;color:#1c1c1c;transform:scaleX(0.9809);transform-origin:0 0;">Subtype</div><svg class="a" style="left:707px;top:701px;" width="14" height="14" viewBox="0 0 14 14"><defs><radialGradient id="bb714_708" cx="50%" cy="35%" r="65%"><stop offset="0" stop-color="#a8c8f8"/><stop offset="0.6" stop-color="#3f7fd8"/><stop offset="1" stop-color="#1d4fa0"/></radialGradient></defs><circle cx="7" cy="7" r="5.65" fill="url(#bb714_708)" stroke="#1d4fa0" stroke-width="0.7"/><ellipse cx="7" cy="4.48" rx="3.7199999999999998" ry="2.16" fill="#ffffff" fill-opacity="0.55"/></svg><div class="t" style="left:726px;top:703.27px;font-size:11.5px;font-weight:400;color:#1c1c1c;transform:scaleX(0.9809);transform-origin:0 0;">Cost</div><svg class="a" style="left:669px;top:721px;" width="14" height="14" viewBox="0 0 14 14"><defs><radialGradient id="bb676_728" cx="50%" cy="35%" r="65%"><stop offset="0" stop-color="#a8c8f8"/><stop offset="0.6" stop-color="#3f7fd8"/><stop offset="1" stop-color="#1d4fa0"/></radialGradient></defs><circle cx="7" cy="7" r="5.65" fill="url(#bb676_728)" stroke="#1d4fa0" stroke-width="0.7"/><ellipse cx="7" cy="4.48" rx="3.7199999999999998" ry="2.16" fill="#ffffff" fill-opacity="0.55"/></svg><div class="t" style="left:688px;top:723.27px;font-size:11.5px;font-weight:400;color:#1c1c1c;transform:scaleX(0.9809);transform-origin:0 0;">Description</div><svg class="a" style="left:635px;top:745px;" width="10" height="7" viewBox="0 0 10 7"><path d="M1,1L5,5L9,1" fill="none" stroke="#222" stroke-width="1.3"/></svg><svg class="a" style="left:651px;top:739px;" width="12" height="18" viewBox="0 0 12 18"><defs><radialGradient id="vb649_748" cx="50%" cy="35%" r="65%"><stop offset="0" stop-color="#a8c8f8"/><stop offset="0.6" stop-color="#3f7fd8"/><stop offset="1" stop-color="#1d4fa0"/></radialGradient></defs><circle cx="6" cy="5.5" r="4.65" fill="url(#vb649_748)" stroke="#1d4fa0" stroke-width="0.7"/><ellipse cx="6" cy="3.4" rx="3.1" ry="1.7999999999999998" fill="#ffffff" fill-opacity="0.55"/><defs><radialGradient id="vg649_748" cx="50%" cy="35%" r="65%"><stop offset="0" stop-color="#8ad07a"/><stop offset="0.6" stop-color="#2a9a22"/><stop offset="1" stop-color="#106010"/></radialGradient></defs><circle cx="6" cy="11.5" r="4.8500000000000005" fill="url(#vg649_748)" stroke="#106010" stroke-width="0.7"/><ellipse cx="6" cy="9.315999999999999" rx="3.224" ry="1.8719999999999999" fill="#ffffff" fill-opacity="0.55"/></svg><div class="t" style="left:669px;top:743.27px;font-size:11.5px;font-weight:400;color:#1c1c1c;transform:scaleX(0.9809);transform-origin:0 0;">Storage, Usage, &amp; Lifecycle Information</div><svg class="a" style="left:654px;top:765px;" width="10" height="7" viewBox="0 0 10 7"><path d="M1,1L5,5L9,1" fill="none" stroke="#222" stroke-width="1.3"/></svg><svg class="a" style="left:668px;top:762px;" width="17" height="12" viewBox="0 0 17 12"><defs><radialGradient id="hb668_768" cx="50%" cy="35%" r="65%"><stop offset="0" stop-color="#a8c8f8"/><stop offset="0.6" stop-color="#3f7fd8"/><stop offset="1" stop-color="#1d4fa0"/></radialGradient></defs><circle cx="11" cy="6" r="4.8500000000000005" fill="url(#hb668_768)" stroke="#1d4fa0" stroke-width="0.7"/><ellipse cx="11" cy="3.816" rx="3.224" ry="1.8719999999999999" fill="#ffffff" fill-opacity="0.55"/><defs><radialGradient id="hg668_768" cx="50%" cy="35%" r="65%"><stop offset="0" stop-color="#8ad07a"/><stop offset="0.6" stop-color="#2a9a22"/><stop offset="1" stop-color="#106010"/></radialGradient></defs><circle cx="6" cy="6" r="4.8500000000000005" fill="url(#hg668_768)" stroke="#106010" stroke-width="0.7"/><ellipse cx="6" cy="3.816" rx="3.224" ry="1.8719999999999999" fill="#ffffff" fill-opacity="0.55"/></svg><div class="t" style="left:688px;top:763.27px;font-size:11.5px;font-weight:400;color:#1c1c1c;transform:scaleX(0.9809);transform-origin:0 0;">Storage Info. - Left and Right Columns</div><svg class="a" style="left:673px;top:785px;" width="10" height="7" viewBox="0 0 10 7"><path d="M1,1L5,5L9,1" fill="none" stroke="#222" stroke-width="1.3"/></svg><svg class="a" style="left:689px;top:779px;" width="12" height="18" viewBox="0 0 12 18"><defs><radialGradient id="vb687_788" cx="50%" cy="35%" r="65%"><stop offset="0" stop-color="#a8c8f8"/><stop offset="0.6" stop-color="#3f7fd8"/><stop offset="1" stop-color="#1d4fa0"/></radialGradient></defs><circle cx="6" cy="5.5" r="4.65" fill="url(#vb687_788)" stroke="#1d4fa0" stroke-width="0.7"/><ellipse cx="6" cy="3.4" rx="3.1" ry="1.7999999999999998" fill="#ffffff" fill-opacity="0.55"/><defs><radialGradient id="vg687_788" cx="50%" cy="35%" r="65%"><stop offset="0" stop-color="#8ad07a"/><stop offset="0.6" stop-color="#2a9a22"/><stop offset="1" stop-color="#106010"/></radialGradient></defs><circle cx="6" cy="11.5" r="4.8500000000000005" fill="url(#vg687_788)" stroke="#106010" stroke-width="0.7"/><ellipse cx="6" cy="9.315999999999999" rx="3.224" ry="1.8719999999999999" fill="#ffffff" fill-opacity="0.55"/></svg><div class="t" style="left:707px;top:783.27px;font-size:11.5px;font-weight:400;color:#1c1c1c;transform:scaleX(0.9809);transform-origin:0 0;">Storage Info. - Left Column</div><svg class="a" style="left:707px;top:801px;" width="14" height="14" viewBox="0 0 14 14"><defs><radialGradient id="bb714_808" cx="50%" cy="35%" r="65%"><stop offset="0" stop-color="#a8c8f8"/><stop offset="0.6" stop-color="#3f7fd8"/><stop offset="1" stop-color="#1d4fa0"/></radialGradient></defs><circle cx="7" cy="7" r="5.65" fill="url(#bb714_808)" stroke="#1d4fa0" stroke-width="0.7"/><ellipse cx="7" cy="4.48" rx="3.7199999999999998" ry="2.16" fill="#ffffff" fill-opacity="0.55"/></svg><div class="t" style="left:726px;top:803.27px;font-size:11.5px;font-weight:400;color:#1c1c1c;transform:scaleX(0.9809);transform-origin:0 0;">Owner</div></div></div><div class="a" style="left:963px;top:437px;width:315px;height:369px;overflow:hidden"><div class="a" style="left:-963px;top:-437px;width:1303px;height:868px"><div class="a" style="left:972px;top:445px;width:1px;height:375px;background:repeating-linear-gradient(#b4b4b4 0 1px, transparent 1px 2px)"></div><div class="a" style="left:972px;top:444px;width:5px;height:1px;background:repeating-linear-gradient(90deg,#b4b4b4 0 1px, transparent 1px 2px)"></div><svg class="a" style="left:981px;top:441px;" width="14" height="14" viewBox="0 0 14 14"><defs><radialGradient id="bb988_448" cx="50%" cy="35%" r="65%"><stop offset="0" stop-color="#a8c8f8"/><stop offset="0.6" stop-color="#3f7fd8"/><stop offset="1" stop-color="#1d4fa0"/></radialGradient></defs><circle cx="7" cy="7" r="5.65" fill="url(#bb988_448)" stroke="#1d4fa0" stroke-width="0.7"/><ellipse cx="7" cy="4.48" rx="3.7199999999999998" ry="2.16" fill="#ffffff" fill-opacity="0.55"/></svg><div class="t" style="left:1000px;top:443.27px;font-size:11.5px;font-weight:400;color:#1c1c1c;transform:scaleX(0.9809);transform-origin:0 0;">Active</div><div class="a" style="left:972px;top:468px;width:5px;height:1px;background:repeating-linear-gradient(90deg,#b4b4b4 0 1px, transparent 1px 2px)"></div><svg class="a" style="left:981px;top:461px;" width="14" height="14" viewBox="0 0 14 14"><defs><radialGradient id="bb988_468" cx="50%" cy="35%" r="65%"><stop offset="0" stop-color="#a8c8f8"/><stop offset="0.6" stop-color="#3f7fd8"/><stop offset="1" stop-color="#1d4fa0"/></radialGradient></defs><circle cx="7" cy="7" r="5.65" fill="url(#bb988_468)" stroke="#1d4fa0" stroke-width="0.7"/><ellipse cx="7" cy="4.48" rx="3.7199999999999998" ry="2.16" fill="#ffffff" fill-opacity="0.55"/></svg><div class="t" style="left:1000px;top:463.27px;font-size:11.5px;font-weight:400;color:#1c1c1c;transform:scaleX(0.9809);transform-origin:0 0;">Adjustable</div><div class="a" style="left:972px;top:488px;width:5px;height:1px;background:repeating-linear-gradient(90deg,#b4b4b4 0 1px, transparent 1px 2px)"></div><svg class="a" style="left:981px;top:481px;" width="14" height="14" viewBox="0 0 14 14"><defs><radialGradient id="bb988_488" cx="50%" cy="35%" r="65%"><stop offset="0" stop-color="#a8c8f8"/><stop offset="0.6" stop-color="#3f7fd8"/><stop offset="1" stop-color="#1d4fa0"/></radialGradient></defs><circle cx="7" cy="7" r="5.65" fill="url(#bb988_488)" stroke="#1d4fa0" stroke-width="0.7"/><ellipse cx="7" cy="4.48" rx="3.7199999999999998" ry="2.16" fill="#ffffff" fill-opacity="0.55"/></svg><div class="t" style="left:1000px;top:483.27px;font-size:11.5px;font-weight:400;color:#1c1c1c;transform:scaleX(0.9809);transform-origin:0 0;">Alternate ID</div><div class="a" style="left:972px;top:508px;width:5px;height:1px;background:repeating-linear-gradient(90deg,#b4b4b4 0 1px, transparent 1px 2px)"></div><svg class="a" style="left:981px;top:501px;" width="14" height="14" viewBox="0 0 14 14"><defs><radialGradient id="bb988_508" cx="50%" cy="35%" r="65%"><stop offset="0" stop-color="#a8c8f8"/><stop offset="0.6" stop-color="#3f7fd8"/><stop offset="1" stop-color="#1d4fa0"/></radialGradient></defs><circle cx="7" cy="7" r="5.65" fill="url(#bb988_508)" stroke="#1d4fa0" stroke-width="0.7"/><ellipse cx="7" cy="4.48" rx="3.7199999999999998" ry="2.16" fill="#ffffff" fill-opacity="0.55"/></svg><div class="t" style="left:1000px;top:503.27px;font-size:11.5px;font-weight:400;color:#1c1c1c;transform:scaleX(0.9809);transform-origin:0 0;">Bin Number</div><div class="a" style="left:972px;top:528px;width:5px;height:1px;background:repeating-linear-gradient(90deg,#b4b4b4 0 1px, transparent 1px 2px)"></div><svg class="a" style="left:981px;top:521px;" width="14" height="14" viewBox="0 0 14 14"><defs><radialGradient id="bb988_528" cx="50%" cy="35%" r="65%"><stop offset="0" stop-color="#a8c8f8"/><stop offset="0.6" stop-color="#3f7fd8"/><stop offset="1" stop-color="#1d4fa0"/></radialGradient></defs><circle cx="7" cy="7" r="5.65" fill="url(#bb988_528)" stroke="#1d4fa0" stroke-width="0.7"/><ellipse cx="7" cy="4.48" rx="3.7199999999999998" ry="2.16" fill="#ffffff" fill-opacity="0.55"/></svg><div class="t" style="left:1000px;top:523.27px;font-size:11.5px;font-weight:400;color:#1c1c1c;transform:scaleX(0.9809);transform-origin:0 0;">Branch</div><div class="a" style="left:972px;top:548px;width:5px;height:1px;background:repeating-linear-gradient(90deg,#b4b4b4 0 1px, transparent 1px 2px)"></div><svg class="a" style="left:981px;top:541px;" width="14" height="14" viewBox="0 0 14 14"><defs><radialGradient id="bb988_548" cx="50%" cy="35%" r="65%"><stop offset="0" stop-color="#a8c8f8"/><stop offset="0.6" stop-color="#3f7fd8"/><stop offset="1" stop-color="#1d4fa0"/></radialGradient></defs><circle cx="7" cy="7" r="5.65" fill="url(#bb988_548)" stroke="#1d4fa0" stroke-width="0.7"/><ellipse cx="7" cy="4.48" rx="3.7199999999999998" ry="2.16" fill="#ffffff" fill-opacity="0.55"/></svg><div class="t" style="left:1000px;top:543.27px;font-size:11.5px;font-weight:400;color:#1c1c1c;transform:scaleX(0.9809);transform-origin:0 0;">Broken</div><div class="a" style="left:972px;top:568px;width:5px;height:1px;background:repeating-linear-gradient(90deg,#b4b4b4 0 1px, transparent 1px 2px)"></div><svg class="a" style="left:981px;top:561px;" width="14" height="14" viewBox="0 0 14 14"><defs><radialGradient id="bb988_568" cx="50%" cy="35%" r="65%"><stop offset="0" stop-color="#a8c8f8"/><stop offset="0.6" stop-color="#3f7fd8"/><stop offset="1" stop-color="#1d4fa0"/></radialGradient></defs><circle cx="7" cy="7" r="5.65" fill="url(#bb988_568)" stroke="#1d4fa0" stroke-width="0.7"/><ellipse cx="7" cy="4.48" rx="3.7199999999999998" ry="2.16" fill="#ffffff" fill-opacity="0.55"/></svg><div class="t" style="left:1000px;top:563.27px;font-size:11.5px;font-weight:400;color:#1c1c1c;transform:scaleX(0.9809);transform-origin:0 0;">Charge Template</div><div class="a" style="left:972px;top:588px;width:5px;height:1px;background:repeating-linear-gradient(90deg,#b4b4b4 0 1px, transparent 1px 2px)"></div><svg class="a" style="left:981px;top:581px;" width="14" height="14" viewBox="0 0 14 14"><defs><radialGradient id="bb988_588" cx="50%" cy="35%" r="65%"><stop offset="0" stop-color="#a8c8f8"/><stop offset="0.6" stop-color="#3f7fd8"/><stop offset="1" stop-color="#1d4fa0"/></radialGradient></defs><circle cx="7" cy="7" r="5.65" fill="url(#bb988_588)" stroke="#1d4fa0" stroke-width="0.7"/><ellipse cx="7" cy="4.48" rx="3.7199999999999998" ry="2.16" fill="#ffffff" fill-opacity="0.55"/></svg><div class="t" style="left:1000px;top:583.27px;font-size:11.5px;font-weight:400;color:#1c1c1c;transform:scaleX(0.9809);transform-origin:0 0;">Company</div><div class="a" style="left:972px;top:608px;width:5px;height:1px;background:repeating-linear-gradient(90deg,#b4b4b4 0 1px, transparent 1px 2px)"></div><svg class="a" style="left:981px;top:601px;" width="14" height="14" viewBox="0 0 14 14"><defs><radialGradient id="bb988_608" cx="50%" cy="35%" r="65%"><stop offset="0" stop-color="#a8c8f8"/><stop offset="0.6" stop-color="#3f7fd8"/><stop offset="1" stop-color="#1d4fa0"/></radialGradient></defs><circle cx="7" cy="7" r="5.65" fill="url(#bb988_608)" stroke="#1d4fa0" stroke-width="0.7"/><ellipse cx="7" cy="4.48" rx="3.7199999999999998" ry="2.16" fill="#ffffff" fill-opacity="0.55"/></svg><div class="t" style="left:1000px;top:603.27px;font-size:11.5px;font-weight:400;color:#1c1c1c;transform:scaleX(0.9809);transform-origin:0 0;">Company Full Name or ID</div><div class="a" style="left:972px;top:628px;width:5px;height:1px;background:repeating-linear-gradient(90deg,#b4b4b4 0 1px, transparent 1px 2px)"></div><svg class="a" style="left:981px;top:621px;" width="14" height="14" viewBox="0 0 14 14"><defs><radialGradient id="bb988_628" cx="50%" cy="35%" r="65%"><stop offset="0" stop-color="#a8c8f8"/><stop offset="0.6" stop-color="#3f7fd8"/><stop offset="1" stop-color="#1d4fa0"/></radialGradient></defs><circle cx="7" cy="7" r="5.65" fill="url(#bb988_628)" stroke="#1d4fa0" stroke-width="0.7"/><ellipse cx="7" cy="4.48" rx="3.7199999999999998" ry="2.16" fill="#ffffff" fill-opacity="0.55"/></svg><div class="t" style="left:1000px;top:623.27px;font-size:11.5px;font-weight:400;color:#1c1c1c;transform:scaleX(0.9809);transform-origin:0 0;">Company Notes</div><div class="a" style="left:972px;top:648px;width:5px;height:1px;background:repeating-linear-gradient(90deg,#b4b4b4 0 1px, transparent 1px 2px)"></div><svg class="a" style="left:981px;top:641px;" width="14" height="14" viewBox="0 0 14 14"><defs><radialGradient id="bb988_648" cx="50%" cy="35%" r="65%"><stop offset="0" stop-color="#a8c8f8"/><stop offset="0.6" stop-color="#3f7fd8"/><stop offset="1" stop-color="#1d4fa0"/></radialGradient></defs><circle cx="7" cy="7" r="5.65" fill="url(#bb988_648)" stroke="#1d4fa0" stroke-width="0.7"/><ellipse cx="7" cy="4.48" rx="3.7199999999999998" ry="2.16" fill="#ffffff" fill-opacity="0.55"/></svg><div class="t" style="left:1000px;top:643.27px;font-size:11.5px;font-weight:400;color:#1c1c1c;transform:scaleX(0.9809);transform-origin:0 0;">Crib Number</div><div class="a" style="left:972px;top:668px;width:5px;height:1px;background:repeating-linear-gradient(90deg,#b4b4b4 0 1px, transparent 1px 2px)"></div><svg class="a" style="left:981px;top:661px;" width="14" height="14" viewBox="0 0 14 14"><defs><radialGradient id="bb988_668" cx="50%" cy="35%" r="65%"><stop offset="0" stop-color="#a8c8f8"/><stop offset="0.6" stop-color="#3f7fd8"/><stop offset="1" stop-color="#1d4fa0"/></radialGradient></defs><circle cx="7" cy="7" r="5.65" fill="url(#bb988_668)" stroke="#1d4fa0" stroke-width="0.7"/><ellipse cx="7" cy="4.48" rx="3.7199999999999998" ry="2.16" fill="#ffffff" fill-opacity="0.55"/></svg><div class="t" style="left:1000px;top:663.27px;font-size:11.5px;font-weight:400;color:#1c1c1c;transform:scaleX(0.9809);transform-origin:0 0;">Custom Date 7</div><div class="a" style="left:972px;top:688px;width:5px;height:1px;background:repeating-linear-gradient(90deg,#b4b4b4 0 1px, transparent 1px 2px)"></div><svg class="a" style="left:981px;top:681px;" width="14" height="14" viewBox="0 0 14 14"><defs><radialGradient id="bb988_688" cx="50%" cy="35%" r="65%"><stop offset="0" stop-color="#a8c8f8"/><stop offset="0.6" stop-color="#3f7fd8"/><stop offset="1" stop-color="#1d4fa0"/></radialGradient></defs><circle cx="7" cy="7" r="5.65" fill="url(#bb988_688)" stroke="#1d4fa0" stroke-width="0.7"/><ellipse cx="7" cy="4.48" rx="3.7199999999999998" ry="2.16" fill="#ffffff" fill-opacity="0.55"/></svg><div class="t" style="left:1000px;top:683.27px;font-size:11.5px;font-weight:400;color:#1c1c1c;transform:scaleX(0.9809);transform-origin:0 0;">Custom Date 8</div><div class="a" style="left:972px;top:708px;width:5px;height:1px;background:repeating-linear-gradient(90deg,#b4b4b4 0 1px, transparent 1px 2px)"></div><svg class="a" style="left:981px;top:701px;" width="14" height="14" viewBox="0 0 14 14"><defs><radialGradient id="bb988_708" cx="50%" cy="35%" r="65%"><stop offset="0" stop-color="#a8c8f8"/><stop offset="0.6" stop-color="#3f7fd8"/><stop offset="1" stop-color="#1d4fa0"/></radialGradient></defs><circle cx="7" cy="7" r="5.65" fill="url(#bb988_708)" stroke="#1d4fa0" stroke-width="0.7"/><ellipse cx="7" cy="4.48" rx="3.7199999999999998" ry="2.16" fill="#ffffff" fill-opacity="0.55"/></svg><div class="t" style="left:1000px;top:703.27px;font-size:11.5px;font-weight:400;color:#1c1c1c;transform:scaleX(0.9809);transform-origin:0 0;">Custom Date 9</div><div class="a" style="left:972px;top:728px;width:5px;height:1px;background:repeating-linear-gradient(90deg,#b4b4b4 0 1px, transparent 1px 2px)"></div><svg class="a" style="left:981px;top:721px;" width="14" height="14" viewBox="0 0 14 14"><defs><radialGradient id="bb988_728" cx="50%" cy="35%" r="65%"><stop offset="0" stop-color="#a8c8f8"/><stop offset="0.6" stop-color="#3f7fd8"/><stop offset="1" stop-color="#1d4fa0"/></radialGradient></defs><circle cx="7" cy="7" r="5.65" fill="url(#bb988_728)" stroke="#1d4fa0" stroke-width="0.7"/><ellipse cx="7" cy="4.48" rx="3.7199999999999998" ry="2.16" fill="#ffffff" fill-opacity="0.55"/></svg><div class="t" style="left:1000px;top:723.27px;font-size:11.5px;font-weight:400;color:#1c1c1c;transform:scaleX(0.9809);transform-origin:0 0;">Custom Date 10</div><div class="a" style="left:972px;top:748px;width:5px;height:1px;background:repeating-linear-gradient(90deg,#b4b4b4 0 1px, transparent 1px 2px)"></div><svg class="a" style="left:981px;top:741px;" width="14" height="14" viewBox="0 0 14 14"><defs><radialGradient id="bb988_748" cx="50%" cy="35%" r="65%"><stop offset="0" stop-color="#a8c8f8"/><stop offset="0.6" stop-color="#3f7fd8"/><stop offset="1" stop-color="#1d4fa0"/></radialGradient></defs><circle cx="7" cy="7" r="5.65" fill="url(#bb988_748)" stroke="#1d4fa0" stroke-width="0.7"/><ellipse cx="7" cy="4.48" rx="3.7199999999999998" ry="2.16" fill="#ffffff" fill-opacity="0.55"/></svg><div class="t" style="left:1000px;top:743.27px;font-size:11.5px;font-weight:400;color:#1c1c1c;transform:scaleX(0.9809);transform-origin:0 0;">Custom Image 1</div><div class="a" style="left:972px;top:768px;width:5px;height:1px;background:repeating-linear-gradient(90deg,#b4b4b4 0 1px, transparent 1px 2px)"></div><svg class="a" style="left:981px;top:761px;" width="14" height="14" viewBox="0 0 14 14"><defs><radialGradient id="bb988_768" cx="50%" cy="35%" r="65%"><stop offset="0" stop-color="#a8c8f8"/><stop offset="0.6" stop-color="#3f7fd8"/><stop offset="1" stop-color="#1d4fa0"/></radialGradient></defs><circle cx="7" cy="7" r="5.65" fill="url(#bb988_768)" stroke="#1d4fa0" stroke-width="0.7"/><ellipse cx="7" cy="4.48" rx="3.7199999999999998" ry="2.16" fill="#ffffff" fill-opacity="0.55"/></svg><div class="t" style="left:1000px;top:763.27px;font-size:11.5px;font-weight:400;color:#1c1c1c;transform:scaleX(0.9809);transform-origin:0 0;">Custom Image 2</div><div class="a" style="left:972px;top:788px;width:5px;height:1px;background:repeating-linear-gradient(90deg,#b4b4b4 0 1px, transparent 1px 2px)"></div><svg class="a" style="left:981px;top:781px;" width="14" height="14" viewBox="0 0 14 14"><defs><radialGradient id="bb988_788" cx="50%" cy="35%" r="65%"><stop offset="0" stop-color="#a8c8f8"/><stop offset="0.6" stop-color="#3f7fd8"/><stop offset="1" stop-color="#1d4fa0"/></radialGradient></defs><circle cx="7" cy="7" r="5.65" fill="url(#bb988_788)" stroke="#1d4fa0" stroke-width="0.7"/><ellipse cx="7" cy="4.48" rx="3.7199999999999998" ry="2.16" fill="#ffffff" fill-opacity="0.55"/></svg><div class="t" style="left:1000px;top:783.27px;font-size:11.5px;font-weight:400;color:#1c1c1c;transform:scaleX(0.9809);transform-origin:0 0;">Custom Image 3</div><div class="a" style="left:972px;top:808px;width:5px;height:1px;background:repeating-linear-gradient(90deg,#b4b4b4 0 1px, transparent 1px 2px)"></div><svg class="a" style="left:981px;top:801px;" width="14" height="14" viewBox="0 0 14 14"><defs><radialGradient id="bb988_808" cx="50%" cy="35%" r="65%"><stop offset="0" stop-color="#a8c8f8"/><stop offset="0.6" stop-color="#3f7fd8"/><stop offset="1" stop-color="#1d4fa0"/></radialGradient></defs><circle cx="7" cy="7" r="5.65" fill="url(#bb988_808)" stroke="#1d4fa0" stroke-width="0.7"/><ellipse cx="7" cy="4.48" rx="3.7199999999999998" ry="2.16" fill="#ffffff" fill-opacity="0.55"/></svg><div class="t" style="left:1000px;top:803.27px;font-size:11.5px;font-weight:400;color:#1c1c1c;transform:scaleX(0.9809);transform-origin:0 0;">Custom Image 4</div></div></div><div class="a" style="left:578px;top:834px;width:16px;height:16px;background:#fff;border:1px solid #8a8a8a"></div><div class="t" style="left:599px;top:837.27px;font-size:11.5px;font-weight:400;color:#1c1c1c;transform:scaleX(0.9809);transform-origin:0 0;"><u>T</u>abbed View</div><div class="a" style="left:1219px;top:830px;width:75px;height:25px;background:#fff;border:1px solid #8a8a8a"></div><div class="t" style="left:1256.5px;top:837.27px;font-size:11.5px;font-weight:400;color:#1c1c1c;transform:translateX(-50%) scaleX(0.9809);"><u>C</u>lose</div>
</body></html>
